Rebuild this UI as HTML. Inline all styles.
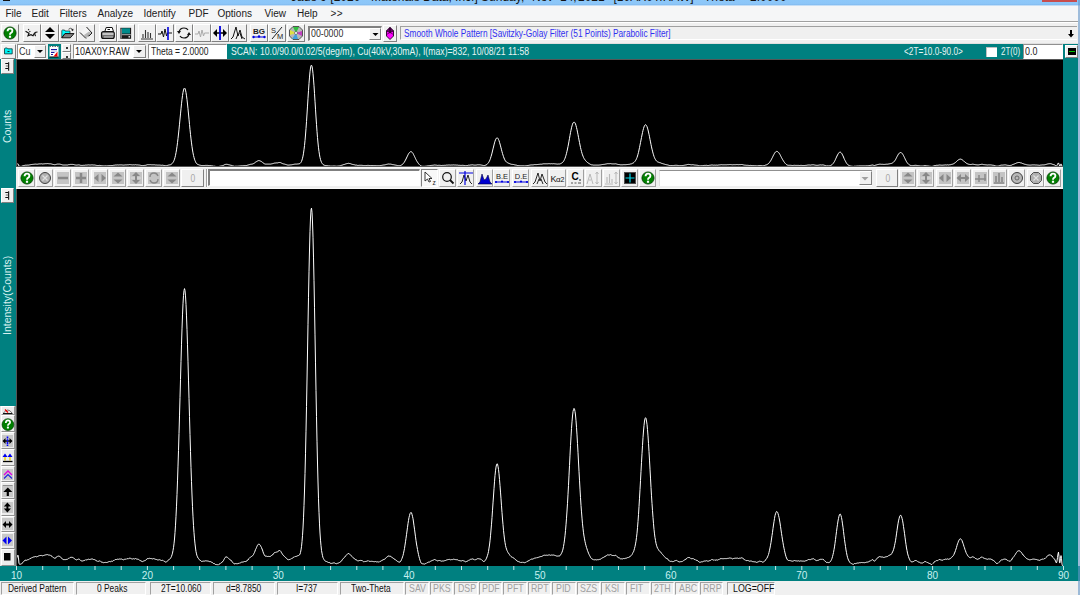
<!DOCTYPE html><html><head><meta charset="utf-8"><style>
*{box-sizing:border-box;margin:0;padding:0}
html,body{width:1080px;height:595px;overflow:hidden;background:#f0f0f0;font-family:"Liberation Sans",sans-serif;position:relative}
div{position:absolute}
.t{white-space:nowrap;font-size:10px;line-height:11px;color:#000}
.c{transform-origin:0 50%}
.b{background:#f0f0f0;border-top:1px solid #fff;border-left:1px solid #fff;border-right:1px solid #808080;border-bottom:1px solid #808080}
.bd{background:#f0f0f0;border-top:1px solid #fff;border-left:1px solid #fff;border-right:1px solid #808080;border-bottom:1px solid #808080}
.bd:after{content:"";position:absolute;left:2px;top:2px;right:2px;bottom:2px;background:#c8c8c8}
.sunk{background:#fff;border-top:1px solid #808080;border-left:1px solid #808080;border-right:1px solid #fff;border-bottom:1px solid #fff}
svg{position:absolute;left:0;top:0;overflow:visible}
.bm{background:#f0f0f0;border-top:1px solid #fff;border-left:1px solid #fff;border-right:1px solid #a0a0a0;border-bottom:1px solid #a0a0a0}
.sb{background:#f0f0f0;border-top:1px solid #a0a0a0;border-left:1px solid #a0a0a0;border-right:1px solid #fff;border-bottom:1px solid #fff}
</style></head><body>
<div style="left:0;top:0;width:1080px;height:5px;background:linear-gradient(#8dc8f9 0%,#8cc6f8 70%,#82bbef 100%);overflow:hidden"><div class="t" style="left:291px;top:-9px;font-size:12px;line-height:12px;color:#141414">Jade 9 [2020 - Materials Data, Inc.] Sunday,</div><div class="t" style="left:532px;top:-9px;font-size:12px;line-height:12px;color:#141414">Nov</div><div class="t" style="left:560px;top:-9px;font-size:12px;line-height:12px;color:#141414">14,</div><div class="t" style="left:578px;top:-9px;font-size:12px;line-height:12px;color:#141414">2021</div><div class="t" style="left:613.5px;top:-9px;font-size:12px;line-height:12px;color:#141414">[10AX0Y.RAW]</div><div class="t" style="left:704px;top:-9px;font-size:12px;line-height:12px;color:#141414">Theta</div><div class="t" style="left:738px;top:-9px;font-size:12px;line-height:12px;color:#141414">=</div><div class="t" style="left:750px;top:-9px;font-size:12px;line-height:12px;color:#141414">2.0000</div><div style="left:1042px;top:0;width:35px;height:2px;background:#c84d4d"></div><div style="left:2.5px;top:0;width:7.5px;height:1px;background:#111"></div></div><div style="left:0;top:5px;width:1080px;height:16px;background:#f5f6f7"></div><div style="left:0;top:5px;width:1080px;height:1px;background:#c4def6"></div><div style="left:0;top:21px;width:1078px;height:1px;background:#a0a0a0"></div><div style="left:0;top:22px;width:1078px;height:1px;background:#fff"></div><div class="t" style="left:5.5px;top:8px;color:#202020">File</div><div class="t" style="left:31.5px;top:8px;color:#202020">Edit</div><div class="t" style="left:59.5px;top:8px;color:#202020">Filters</div><div class="t" style="left:97.5px;top:8px;color:#202020">Analyze</div><div class="t" style="left:143.5px;top:8px;color:#202020">Identify</div><div class="t" style="left:188.5px;top:8px;color:#202020">PDF</div><div class="t" style="left:217.5px;top:8px;color:#202020">Options</div><div class="t" style="left:264.5px;top:8px;color:#202020">View</div><div class="t" style="left:297px;top:8px;color:#202020">Help</div><div class="t" style="left:330.5px;top:8px;color:#202020"><span style="letter-spacing:0.5px">&gt;&gt;</span></div><div class="b" style="left:1px;top:24px;width:18px;height:18px"><svg width="16" height="16" viewBox="0 0 16 16"><circle cx="8" cy="8" r="6.1" fill="#008000" stroke="#003a00" stroke-width="0.8"/><path d="M5.6 6.3 Q5.6 3.6 8 3.6 Q10.4 3.6 10.4 5.8 Q10.4 7.2 9 7.9 Q8 8.4 8 9.7" stroke="#fff" stroke-width="1.9" fill="none"/><rect x="6.9" y="10.7" width="2.2" height="2.1" fill="#fff"/></svg></div><div class="b" style="left:23px;top:24px;width:18px;height:18px"><svg width="16" height="16" viewBox="0 0 16 16"><path d="M1.5 6.3 L5 8.2 L4 10.7 L7 9.7 L9 10.8 L10.5 8.2 Q11.5 7 13.5 7" stroke="#111" stroke-width="1.2" fill="none"/><path d="M11.2 8.3 Q10.3 10 11.7 11" stroke="#111" stroke-width="1.1" fill="none"/><path d="M4.2 4.3 L5 5 M5.5 6 L6.2 7" stroke="#222" stroke-width="1.2"/></svg></div><div class="b" style="left:41px;top:24px;width:18px;height:18px"><svg width="16" height="16" viewBox="0 0 16 16"><path d="M8 2 L13 7 L3 7 Z M3 9 L13 9 L8 14 Z" fill="#000"/></svg></div><div class="b" style="left:59px;top:24px;width:18px;height:18px"><svg width="16" height="16" viewBox="0 0 16 16"><path d="M1.8 12.5 L1.8 5.5 L2.5 5 L4.5 5 L5 6 L10 6 L10 8.5 L5 8.5 L1.8 12.5 Z" fill="#00ffff" stroke="#102020" stroke-width="0.7"/><path d="M1.8 12.8 L5 8.6 L14 8.6 L10.3 12.8 Z" fill="#808080" stroke="#000" stroke-width="0.9"/><path d="M8.5 4.3 Q10.5 2.3 12.5 4.2" stroke="#555" stroke-width="1" fill="none"/><path d="M11 4.8 L13.5 3.8 L13 6.2 Z" fill="#111"/></svg></div><div class="b" style="left:77px;top:24px;width:18px;height:18px"><svg width="16" height="16" viewBox="0 0 16 16"><path d="M2 7.5 L8.5 2 L14 8 L8 13.5 Z" fill="#f4f4f4"/><path d="M8 13.5 L11 11 L14 8 L11 6.5 L6 10 Z" fill="#b8b8b8"/><path d="M9.5 10 L12 9.5 L10.5 12 Z" fill="#808080"/><path d="M2 7.5 L8 13.5 M8.5 2 L14 8 L11 11" stroke="#222" stroke-width="1" fill="none"/></svg></div><div class="b" style="left:99px;top:24px;width:18px;height:18px"><svg width="16" height="16" viewBox="0 0 16 16"><path d="M6.2 2.5 L12.2 2.5 L13.5 6.5 L4.8 6.5 Z" fill="#fff" stroke="#111" stroke-width="1"/><path d="M7.5 4.5 L10 4.5" stroke="#111" stroke-width="1"/><rect x="1.5" y="6.5" width="12.8" height="7" rx="2" fill="#707070" stroke="#111" stroke-width="1.1"/><rect x="2.5" y="8.2" width="11" height="1.6" fill="#d8d8d8"/><rect x="4" y="11.3" width="9" height="1.2" fill="#b0b0b0"/></svg></div><div class="b" style="left:117px;top:24px;width:18px;height:18px"><svg width="16" height="16" viewBox="0 0 16 16"><rect x="2.3" y="2.8" width="10.8" height="11" fill="#1a1a1a"/><rect x="2.6" y="3.5" width="1.2" height="10" fill="#909090"/><rect x="4" y="3.3" width="8" height="5.2" fill="#008b8b"/><rect x="3.8" y="9.2" width="9" height="1" fill="#b0b0b0"/><rect x="10.5" y="11" width="1.5" height="1.6" fill="#d0d0d0"/></svg></div><div class="b" style="left:138px;top:24px;width:18px;height:18px"><svg width="16" height="16" viewBox="0 0 16 16"><path d="M2 14 L14 14 M4 13 L4 9 M6.5 13 L6.5 5 M9 13 L9 7 M11.5 13 L11.5 8" stroke="#333" stroke-width="1.1" fill="none"/></svg></div><div class="b" style="left:156px;top:24px;width:18px;height:18px"><svg width="16" height="16" viewBox="0 0 16 16"><path d="M1 9 L4 9 L5 6 L6.5 12 L8 4 L9.5 11 L10.5 8 L15 8" stroke="#111" stroke-width="1" fill="none"/><path d="M11 2 L11 15" stroke="#0000e0" stroke-width="1.6"/></svg></div><div class="b" style="left:175px;top:24px;width:18px;height:18px"><svg width="16" height="16" viewBox="0 0 16 16"><path d="M3 7 Q4 3 8 3 Q11 3 12 5 M13 9 Q12 13 8 13 Q5 13 4 11" stroke="#111" stroke-width="1.2" fill="none"/><path d="M1 6 L5 6 L3 9 Z M11 10 L15 10 L13 7 Z" fill="#111"/></svg></div><div class="b" style="left:193px;top:24px;width:18px;height:18px"><svg width="16" height="16" viewBox="0 0 16 16"><path d="M1 9 L4 9 L5 6 L6.5 12 L8 5 L9.5 11 L10.5 8 L15 8" stroke="#aaa" stroke-width="1" fill="none"/></svg></div><div class="b" style="left:211px;top:24px;width:18px;height:18px"><svg width="16" height="16" viewBox="0 0 16 16"><path d="M1 8 L5 4 L5 12 Z M15 8 L11 4 L11 12 Z" fill="#000"/><path d="M4 8 L12 8" stroke="#000" stroke-width="1.5"/><path d="M8 1 L8 15" stroke="#0000e0" stroke-width="1.8"/></svg></div><div class="b" style="left:229px;top:24px;width:18px;height:18px"><svg width="16" height="16" viewBox="0 0 16 16"><path d="M1 14 L3 12 L6 2 L8 11 L10 5 L12 12 L15 14 M6 14 L8 9 M10 8 L12 14" stroke="#111" stroke-width="1" fill="none"/></svg></div><div class="b" style="left:250px;top:24px;width:18px;height:18px"><svg width="16" height="16" viewBox="0 0 16 16"><text x="8" y="9" font-family="Liberation Sans" font-size="8" font-weight="bold" fill="#222" text-anchor="middle">BG</text><path d="M2 12 L14 12" stroke="#0000e0" stroke-width="1"/><circle cx="2.5" cy="12" r="1.2" fill="#0000e0"/><circle cx="8" cy="11.5" r="1.2" fill="#0000e0"/><circle cx="13.5" cy="12" r="1.2" fill="#0000e0"/></svg></div><div class="b" style="left:268px;top:24px;width:18px;height:18px"><svg width="16" height="16" viewBox="0 0 16 16"><text x="4.5" y="8" font-family="Liberation Sans" font-size="7.5" fill="#222" text-anchor="middle">S</text><text x="11" y="14" font-family="Liberation Sans" font-size="7.5" fill="#222" text-anchor="middle">M</text><path d="M3 14 L13 2" stroke="#222" stroke-width="1"/></svg></div><div class="b" style="left:287px;top:24px;width:18px;height:18px"><svg width="16" height="16" viewBox="0 0 16 16"><path d="M5 1.5 L11 1.5 L14.5 5 L14.5 11 L11 14.5 L5 14.5 L1.5 11 L1.5 5 Z" fill="#b8b8b8" stroke="#333" stroke-width="0.8"/><path d="M8 8 L5 2 L11 2 Z" fill="#30c040"/><path d="M8 8 L14 6 L14 11 Z" fill="#c040c0"/><path d="M8 8 L10 14 L4 14 Z" fill="#40a0e0"/><path d="M8 8 L2 10 L2 5 Z" fill="#e0e040"/><circle cx="8" cy="8" r="1.5" fill="#fff" stroke="#333" stroke-width="0.5"/></svg></div><div class="sunk" style="left:308px;top:26px;width:74px;height:15px;border-top:2px solid #808080;border-left:2px solid #808080"></div><div class="t" style="left:311px;top:28px;color:#303030;font-size:11px"><span style="display:inline-block;transform:scaleX(0.8);transform-origin:0 0">00-0000</span></div><div class="b" style="left:368.5px;top:27.5px;width:12.5px;height:12px"><svg width="10" height="10" viewBox="0 0 10 10"><path d="M2.5 4 L8.5 4 L5.5 7 Z" fill="#000"/></svg></div><div class="b" style="left:383px;top:25px;width:14px;height:17px"><svg width="12" height="15" viewBox="0 0 12 15"><path d="M6 1.5 L9.5 5 L9.5 10 L6 13.5 L2.5 10 L2.5 5 Z" fill="#ff00ff" stroke="#200020" stroke-width="0.9"/><path d="M6 1.5 L6 6.5 L2.5 5 L6 1.5 L9.5 5 L6 6.5 Z" fill="#700070" stroke="#200020" stroke-width="0.7"/><path d="M2.5 8.5 L6 6.5 L9.5 8.5" stroke="#200020" stroke-width="0.6" fill="none"/></svg></div><div style="left:400px;top:26px;width:677px;height:14px;border-top:1px solid #a0a0a0;border-left:1px solid #a0a0a0;border-bottom:1px solid #fff"></div><div class="t" style="left:404px;top:28px;color:#3030f0"><span style="display:inline-block;transform:scaleX(0.83);transform-origin:0 0">Smooth Whole Pattern [Savitzky-Golay Filter (51 Points) Parabolic Filter]</span></div><svg style="left:0;top:0" width="1080" height="60" viewBox="0 0 1080 60"><path d="M1071 30 L1071 35" stroke="#000" stroke-width="2"/><path d="M1068 34 L1074 34 L1071 37.5 Z" fill="#000"/></svg><div style="left:0;top:43px;width:1080px;height:1px;background:#e0e0e0"></div><div style="left:227px;top:44px;width:796px;height:15px;background:#008080"></div><div style="left:1023px;top:44px;width:55px;height:15px;background:#008080"></div><div class="b" style="left:1px;top:44px;width:15px;height:15px"><svg width="13" height="13" viewBox="0 0 13 13"><path d="M2.5 8.9 L2.5 3.8 L3.2 3 L5.2 3 L5.9 3.8 L10.2 3.8 L10.2 8.9 Z" fill="#00f0f0" stroke="#103030" stroke-width="0.8"/><path d="M5.5 6.5 L7.5 6.5" stroke="#103030" stroke-width="1"/></svg></div><div class="sunk" style="left:16.5px;top:44px;width:29.5px;height:15px;border-top:1px solid #909090;border-left:1px solid #909090"></div><div class="t" style="left:19px;top:46px;color:#333;font-size:11px"><span style="display:inline-block;transform:scaleX(0.82);transform-origin:0 0">Cu</span></div><div class="b" style="left:34px;top:45px;width:11.5px;height:13px"><svg width="10" height="10" viewBox="0 0 10 10"><path d="M2 4 L8 4 L5 7 Z" fill="#000"/></svg></div><div style="left:48px;top:44px;width:12.5px;height:15px;background:#008080"></div><svg style="left:0;top:0" width="80" height="70" viewBox="0 0 80 70"><rect x="49.5" y="46" width="9" height="11" fill="#fff"/><path d="M49.5 57 L58.5 57" stroke="#000" stroke-width="1"/><path d="M49.5 46.5 L58.5 46.5" stroke="#707070" stroke-width="1" stroke-dasharray="1.5 1"/><path d="M51 49.5 L57 49.5" stroke="#1a1aa0" stroke-width="1"/><path d="M51 51 L57 51" stroke="#a8b0e0" stroke-width="1"/><path d="M51 52.5 L54.5 52.5" stroke="#1a1aa0" stroke-width="1"/><path d="M51 54.5 L53 54.5" stroke="#1a1aa0" stroke-width="1"/><path d="M53.5 56.5 L57.5 51.5 L57.5 56.5 Z" fill="#f00000"/></svg><div class="b" style="left:61.5px;top:44px;width:9.5px;height:7.5px"><div style="left:3px;top:2px;width:2px;height:2px;background:#333"></div></div><div class="b" style="left:61.5px;top:51.5px;width:9.5px;height:7.5px"><div style="left:3px;top:3px;width:2px;height:2px;background:#333"></div></div><div class="sunk" style="left:72.5px;top:44px;width:73px;height:15px;border-top:1px solid #909090;border-left:1px solid #909090"></div><div class="t" style="left:75px;top:46px;color:#222;font-size:10.5px"><span style="display:inline-block;transform:scaleX(0.85);transform-origin:0 0">10AX0Y.RAW</span></div><div class="b" style="left:133px;top:45px;width:12.5px;height:13px"><svg width="10" height="10" viewBox="0 0 10 10"><path d="M2 4 L8 4 L5 7 Z" fill="#000"/></svg></div><div class="sunk" style="left:148px;top:44px;width:79px;height:15px;border-top:1px solid #909090;border-left:1px solid #909090"></div><div class="t" style="left:151px;top:46px;color:#222;font-size:10.5px"><span style="display:inline-block;transform:scaleX(0.81);transform-origin:0 0">Theta = 2.0000</span></div><div class="t" style="left:230.5px;top:46px;color:#e8f4f4"><span style="display:inline-block;transform:scaleX(0.867);transform-origin:0 0">SCAN: 10.0/90.0/0.02/5(deg/m), Cu(40kV,30mA), I(max)=832, 10/08/21 11:58</span></div><div class="t" style="left:904px;top:46px;color:#e8f4f4;font-size:10.5px"><span style="display:inline-block;transform:scaleX(0.785);transform-origin:0 0">&lt;2T=10.0-90.0&gt;</span></div><div style="left:986px;top:47px;width:11px;height:10px;background:#fff;border-top:1px solid #c0c0c0;border-left:1px solid #c0c0c0"></div><div class="t" style="left:1001px;top:46px;color:#e8f4f4;font-size:10.5px"><span style="display:inline-block;transform:scaleX(0.76);transform-origin:0 0">2T(0)</span></div><div class="sunk" style="left:1023px;top:44px;width:40px;height:15px;border-top:1px solid #909090;border-left:1px solid #909090"></div><div class="t" style="left:1025px;top:46px;color:#222;font-size:10.5px"><span style="display:inline-block;transform:scaleX(0.85);transform-origin:0 0">0.0</span></div><div class="b" style="left:1065px;top:44.5px;width:13px;height:13px"><div style="left:2px;top:2px;width:8px;height:7px;background:#000"></div><div style="left:3px;top:5px;width:6px;height:1px;background:#00c000"></div></div><div style="left:0;top:59px;width:16px;height:522px;background:#008080"></div><div style="left:1063px;top:59px;width:15px;height:522px;background:#008080"></div><div class="b" style="left:1px;top:59px;width:13px;height:15px"><svg width="11" height="13" viewBox="0 0 11 13"><path d="M3.3 3.5 L6.5 3.5 M3.3 8.5 L6.5 8.5" stroke="#111" stroke-width="1.1" fill="none"/><path d="M3.8 6 L6.5 6" stroke="#777" stroke-width="1.1"/><path d="M6.6 2.3 L6.6 10.8" stroke="#222" stroke-width="1.2"/></svg></div><div class="b" style="left:1px;top:188px;width:13px;height:15px"><svg width="11" height="13" viewBox="0 0 11 13"><path d="M3.3 3.5 L6.5 3.5 M3.3 8.5 L6.5 8.5" stroke="#111" stroke-width="1.1" fill="none"/><path d="M3.8 6 L6.5 6" stroke="#777" stroke-width="1.1"/><path d="M6.6 2.3 L6.6 10.8" stroke="#222" stroke-width="1.2"/></svg></div><div class="t" style="left:-9px;top:121px;width:33px;height:11px;text-align:center;color:#d8f0f0;font-size:10.5px;transform:rotate(-90deg)">Counts</div><div class="t" style="left:-32px;top:290px;width:79px;height:11px;text-align:center;color:#d8f0f0;font-size:10.5px;transform:rotate(-90deg)">Intensity(Counts)</div><div style="left:0;top:406px;width:16px;height:160px;background:#e8e8e8;border-right:1px solid #909090"></div><div style="left:0.5px;top:406px;width:14.5px;height:9px;background:#ececec;border-top:1px solid #fff;border-left:1px solid #fff;border-right:1px solid #909090;border-bottom:1px solid #909090"></div><div style="left:0.5px;top:415px;width:14.5px;height:16.5px;background:#ececec;border-top:1px solid #fff;border-left:1px solid #fff;border-right:1px solid #909090;border-bottom:1px solid #909090"></div><div style="left:0.5px;top:432px;width:14.5px;height:16.5px;background:#ececec;border-top:1px solid #fff;border-left:1px solid #fff;border-right:1px solid #909090;border-bottom:1px solid #909090"></div><div style="left:0.5px;top:448.5px;width:14.5px;height:17px;background:#ececec;border-top:1px solid #fff;border-left:1px solid #fff;border-right:1px solid #909090;border-bottom:1px solid #909090"></div><div style="left:0.5px;top:465.5px;width:14.5px;height:16.5px;background:#ececec;border-top:1px solid #fff;border-left:1px solid #fff;border-right:1px solid #909090;border-bottom:1px solid #909090"></div><div style="left:0.5px;top:482px;width:14.5px;height:17px;background:#ececec;border-top:1px solid #fff;border-left:1px solid #fff;border-right:1px solid #909090;border-bottom:1px solid #909090"></div><div style="left:0.5px;top:499px;width:14.5px;height:16.5px;background:#ececec;border-top:1px solid #fff;border-left:1px solid #fff;border-right:1px solid #909090;border-bottom:1px solid #909090"></div><div style="left:0.5px;top:515.5px;width:14.5px;height:16.5px;background:#ececec;border-top:1px solid #fff;border-left:1px solid #fff;border-right:1px solid #909090;border-bottom:1px solid #909090"></div><div style="left:0.5px;top:532px;width:14.5px;height:16.5px;background:#ececec;border-top:1px solid #fff;border-left:1px solid #fff;border-right:1px solid #909090;border-bottom:1px solid #909090"></div><div style="left:0.5px;top:548.5px;width:14.5px;height:17px;background:#ececec;border-top:1px solid #fff;border-left:1px solid #fff;border-right:1px solid #909090;border-bottom:1px solid #909090"></div><div style="left:2px;top:435px;width:11px;height:11.5px;background:#c8c8c8"></div><div style="left:2px;top:469px;width:11px;height:11px;background:#c8c8c8"></div><div style="left:2px;top:485px;width:11px;height:12px;background:#c8c8c8"></div><div style="left:2px;top:501.5px;width:11px;height:11.5px;background:#c8c8c8"></div><div style="left:2px;top:518px;width:11px;height:12px;background:#c8c8c8"></div><div style="left:2px;top:533.5px;width:11px;height:12.5px;background:#c8c8c8"></div><svg width="20" height="595" style="left:0;top:0"><path d="M3.5 413 Q7.8 407 12 413" stroke="#555" stroke-width="0.8" fill="none"/><path d="M5 409.5 L8 412.5" stroke="#f00000" stroke-width="1.2"/><path d="M3 413.5 L12.5 413.5" stroke="#111" stroke-width="1"/><circle cx="7.9" cy="424.6" r="5.9" fill="#008000" stroke="#003a00" stroke-width="0.7"/><path d="M5.8 423 Q5.8 420.3 7.9 420.3 Q10.1 420.3 10.1 422.3 Q10.1 423.5 8.9 424.1 Q7.9 424.6 7.9 425.7" stroke="#fff" stroke-width="1.7" fill="none"/><rect x="6.9" y="426.6" width="2" height="1.9" fill="#fff"/><path d="M2.5 441 L5.5 438 L5.5 444 Z M12.5 441 L9.5 438 L9.5 444 Z" fill="#000"/><path d="M5 441 L10 441" stroke="#000" stroke-width="1.5"/><path d="M7.5 436.5 L7.5 446" stroke="#0000ff" stroke-width="1.6" stroke-dasharray="2 0.7"/><path d="M2.5 457 L5 453.5 L7.5 457 Z M7.5 457 L10 453.5 L12.5 457 Z" fill="#0000f0"/><path d="M5 457 L5 460.5 M10 457 L10 460.5" stroke="#e8d000" stroke-width="1.4"/><path d="M3 461.5 L12.5 461.5" stroke="#000" stroke-width="1.3"/><path d="M4 475 L8 471 L12 475" stroke="#e000e0" stroke-width="1.3" fill="none"/><path d="M4 478.5 L8 474.5 L12 478.5" stroke="#2020e0" stroke-width="1.1" fill="none"/><path d="M3 485.5 L12.5 485.5" stroke="#909090" stroke-width="1"/><path d="M7.8 487.5 L12.3 492 L3.3 492 Z" fill="#000"/><path d="M7.8 491 L7.8 496" stroke="#000" stroke-width="2.2"/><path d="M7.4 502.5 L11 506.5 L3.8 506.5 Z M7.4 512.5 L11 508.5 L3.8 508.5 Z" fill="#000"/><path d="M7.4 506 L7.4 509" stroke="#000" stroke-width="2"/><path d="M2.5 524.5 L6 521 L6 528 Z M12.5 524.5 L9 521 L9 528 Z" fill="#000"/><path d="M5 524.5 L10 524.5" stroke="#000" stroke-width="2"/><path d="M2.5 540.5 L6.5 536.5 L6.5 544.5 Z M12 540.5 L8 536.5 L8 544.5 Z" fill="#0000f0"/><rect x="4" y="553" width="6.5" height="7.5" fill="#000"/></svg><div style="left:16px;top:59px;width:1047px;height:108px;background:#000;border-top:1px solid #555;border-left:1px solid #555;border-bottom:1px solid #555;overflow:hidden"><svg width="1047" height="108" viewBox="16 59 1047 108" style="left:-1px;top:-1px"><path d="M16.0 165.2 L16.5 164.8 L17.0 164.4 L17.5 163.9 L18.0 163.8 L18.5 164.6 L19.0 166.2 L19.5 166.3 L20.0 166.4 L20.5 166.4 L21.0 166.4 L21.5 166.3 L22.0 166.1 L22.5 165.9 L23.0 165.8 L23.5 165.6 L24.0 165.6 L24.5 165.4 L25.0 165.2 L25.5 165.2 L26.0 165.2 L26.5 165.2 L27.0 165.2 L27.5 165.1 L28.0 165.0 L28.5 165.1 L29.0 164.9 L29.5 164.9 L30.0 164.7 L30.5 164.7 L31.0 164.7 L31.5 164.5 L32.0 164.5 L32.5 164.4 L33.0 164.4 L33.5 164.3 L34.0 164.2 L34.5 164.2 L35.0 164.2 L35.5 164.1 L36.0 164.2 L36.5 164.2 L37.0 164.2 L37.5 164.2 L38.0 164.1 L38.5 164.0 L39.0 163.9 L39.5 163.9 L40.0 163.8 L40.5 163.9 L41.0 163.9 L41.5 163.8 L42.0 164.0 L42.5 164.0 L43.0 164.0 L43.5 163.9 L44.0 163.8 L44.5 163.8 L45.0 163.8 L45.5 163.7 L46.0 163.7 L46.5 163.7 L47.0 163.6 L47.5 163.6 L48.0 163.6 L48.5 163.7 L49.0 163.7 L49.5 163.8 L50.0 163.7 L50.5 163.8 L51.0 164.0 L51.5 164.0 L52.0 164.1 L52.5 164.3 L53.0 164.4 L53.5 164.5 L54.0 164.5 L54.5 164.7 L55.0 164.7 L55.5 164.6 L56.0 164.5 L56.5 164.3 L57.0 164.2 L57.5 164.1 L58.0 164.1 L58.5 164.1 L59.0 164.0 L59.5 164.1 L60.0 164.3 L60.5 164.3 L61.0 164.5 L61.5 164.6 L62.0 164.7 L62.5 164.9 L63.0 165.1 L63.5 165.0 L64.0 165.1 L64.5 165.0 L65.0 165.1 L65.5 165.0 L66.0 165.0 L66.5 165.0 L67.0 164.9 L67.5 165.0 L68.0 164.8 L68.5 164.7 L69.0 164.7 L69.5 164.6 L70.0 164.5 L70.5 164.4 L71.0 164.4 L71.5 164.4 L72.0 164.4 L72.5 164.4 L73.0 164.5 L73.5 164.5 L74.0 164.7 L74.5 164.8 L75.0 165.0 L75.5 165.0 L76.0 165.1 L76.5 165.1 L77.0 165.1 L77.5 165.0 L78.0 164.9 L78.5 164.9 L79.0 165.0 L79.5 165.0 L80.0 165.1 L80.5 165.3 L81.0 165.4 L81.5 165.4 L82.0 165.5 L82.5 165.4 L83.0 165.4 L83.5 165.3 L84.0 165.3 L84.5 165.3 L85.0 165.2 L85.5 165.1 L86.0 165.1 L86.5 165.1 L87.0 165.1 L87.5 165.0 L88.0 165.0 L88.5 164.9 L89.0 165.0 L89.5 165.0 L90.0 165.0 L90.5 165.0 L91.0 165.0 L91.5 164.9 L92.0 164.9 L92.5 164.9 L93.0 165.0 L93.5 165.0 L94.0 165.1 L94.5 165.0 L95.0 165.1 L95.5 165.2 L96.0 165.3 L96.5 165.4 L97.0 165.4 L97.5 165.5 L98.0 165.4 L98.5 165.5 L99.0 165.5 L99.5 165.4 L100.0 165.4 L100.5 165.5 L101.0 165.6 L101.5 165.7 L102.0 165.8 L102.5 165.8 L103.0 165.9 L103.5 165.9 L104.0 165.9 L104.5 165.9 L105.0 165.9 L105.5 165.8 L106.0 165.9 L106.5 165.9 L107.0 165.9 L107.5 165.8 L108.0 165.8 L108.5 165.7 L109.0 165.6 L109.5 165.6 L110.0 165.7 L110.5 165.6 L111.0 165.6 L111.5 165.5 L112.0 165.5 L112.5 165.5 L113.0 165.4 L113.5 165.3 L114.0 165.3 L114.5 165.2 L115.0 165.1 L115.5 165.0 L116.0 165.0 L116.5 165.0 L117.0 165.0 L117.5 164.9 L118.0 165.0 L118.5 165.0 L119.0 164.9 L119.5 164.9 L120.0 165.0 L120.5 164.9 L121.0 164.9 L121.5 164.9 L122.0 164.9 L122.5 165.0 L123.0 165.0 L123.5 165.1 L124.0 165.0 L124.5 165.0 L125.0 164.9 L125.5 164.9 L126.0 164.9 L126.5 164.9 L127.0 164.8 L127.5 164.8 L128.0 164.7 L128.5 164.8 L129.0 164.7 L129.5 164.6 L130.0 164.6 L130.5 164.7 L131.0 164.8 L131.5 164.8 L132.0 164.8 L132.5 164.9 L133.0 164.9 L133.5 164.8 L134.0 164.8 L134.5 164.9 L135.0 164.8 L135.5 164.7 L136.0 164.9 L136.5 164.9 L137.0 164.9 L137.5 164.9 L138.0 165.0 L138.5 165.0 L139.0 165.1 L139.5 165.1 L140.0 165.3 L140.5 165.3 L141.0 165.5 L141.5 165.5 L142.0 165.5 L142.5 165.6 L143.0 165.6 L143.5 165.5 L144.0 165.4 L144.5 165.4 L145.0 165.3 L145.5 165.3 L146.0 165.1 L146.5 165.0 L147.0 164.9 L147.5 164.7 L148.0 164.7 L148.5 164.7 L149.0 164.7 L149.5 164.7 L150.0 164.7 L150.5 164.7 L151.0 164.9 L151.5 164.8 L152.0 164.8 L152.5 164.8 L153.0 164.8 L153.5 164.8 L154.0 164.9 L154.5 164.8 L155.0 164.8 L155.5 165.0 L156.0 165.0 L156.5 165.0 L157.0 165.0 L157.5 165.1 L158.0 165.2 L158.5 165.1 L159.0 165.2 L159.5 165.1 L160.0 165.1 L160.5 165.2 L161.0 165.3 L161.5 165.3 L162.0 165.2 L162.5 165.2 L163.0 165.3 L163.5 165.4 L164.0 165.5 L164.5 165.5 L165.0 165.7 L165.5 165.7 L166.0 165.8 L166.5 165.7 L167.0 165.6 L167.5 165.4 L168.0 165.3 L168.5 165.1 L169.0 165.1 L169.5 164.9 L170.0 164.8 L170.5 164.7 L171.0 164.4 L171.5 164.1 L172.0 163.7 L172.5 163.2 L173.0 162.4 L173.5 161.7 L174.0 160.5 L174.5 159.2 L175.0 157.4 L175.5 155.3 L176.0 152.7 L176.5 149.9 L177.0 146.5 L177.5 142.7 L178.0 138.5 L178.5 134.0 L179.0 129.2 L179.5 124.2 L180.0 119.0 L180.5 113.9 L181.0 108.8 L181.5 103.8 L182.0 99.5 L182.5 95.5 L183.0 92.4 L183.5 90.0 L184.0 88.6 L184.5 88.0 L185.0 88.6 L185.5 90.1 L186.0 92.5 L186.5 95.8 L187.0 99.6 L187.5 104.0 L188.0 108.8 L188.5 114.0 L189.0 119.2 L189.5 124.4 L190.0 129.6 L190.5 134.4 L191.0 138.9 L191.5 142.9 L192.0 146.7 L192.5 150.0 L193.0 152.9 L193.5 155.4 L194.0 157.4 L194.5 159.2 L195.0 160.6 L195.5 161.7 L196.0 162.8 L196.5 163.4 L197.0 164.0 L197.5 164.3 L198.0 164.6 L198.5 164.7 L199.0 164.9 L199.5 165.1 L200.0 165.3 L200.5 165.3 L201.0 165.5 L201.5 165.5 L202.0 165.5 L202.5 165.5 L203.0 165.5 L203.5 165.5 L204.0 165.4 L204.5 165.5 L205.0 165.5 L205.5 165.4 L206.0 165.4 L206.5 165.4 L207.0 165.5 L207.5 165.4 L208.0 165.5 L208.5 165.5 L209.0 165.6 L209.5 165.6 L210.0 165.6 L210.5 165.6 L211.0 165.7 L211.5 165.8 L212.0 165.9 L212.5 165.9 L213.0 166.0 L213.5 166.2 L214.0 166.2 L214.5 166.2 L215.0 166.3 L215.5 166.4 L216.0 166.4 L216.5 166.5 L217.0 166.5 L217.5 166.5 L218.0 166.5 L218.5 166.5 L219.0 166.4 L219.5 166.3 L220.0 166.3 L220.5 166.1 L221.0 165.9 L221.5 165.9 L222.0 165.7 L222.5 165.7 L223.0 165.4 L223.5 165.3 L224.0 165.0 L224.5 164.7 L225.0 164.5 L225.5 164.4 L226.0 164.3 L226.5 164.3 L227.0 164.2 L227.5 164.4 L228.0 164.5 L228.5 164.7 L229.0 164.8 L229.5 164.9 L230.0 165.0 L230.5 165.2 L231.0 165.2 L231.5 165.4 L232.0 165.6 L232.5 165.8 L233.0 165.9 L233.5 166.0 L234.0 166.2 L234.5 166.3 L235.0 166.2 L235.5 166.2 L236.0 166.3 L236.5 166.2 L237.0 166.3 L237.5 166.2 L238.0 166.2 L238.5 166.1 L239.0 166.2 L239.5 166.0 L240.0 165.9 L240.5 165.9 L241.0 165.9 L241.5 165.8 L242.0 165.8 L242.5 165.8 L243.0 165.8 L243.5 165.7 L244.0 165.6 L244.5 165.6 L245.0 165.6 L245.5 165.6 L246.0 165.4 L246.5 165.5 L247.0 165.4 L247.5 165.2 L248.0 165.2 L248.5 164.9 L249.0 164.8 L249.5 164.6 L250.0 164.4 L250.5 164.3 L251.0 164.2 L251.5 164.2 L252.0 164.0 L252.5 164.0 L253.0 163.8 L253.5 163.6 L254.0 163.2 L254.5 163.0 L255.0 162.6 L255.5 162.2 L256.0 161.9 L256.5 161.6 L257.0 161.3 L257.5 161.0 L258.0 160.8 L258.5 160.6 L259.0 160.6 L259.5 160.7 L260.0 160.8 L260.5 161.1 L261.0 161.4 L261.5 161.6 L262.0 162.0 L262.5 162.3 L263.0 162.8 L263.5 163.2 L264.0 163.5 L264.5 163.8 L265.0 164.0 L265.5 164.1 L266.0 164.2 L266.5 164.1 L267.0 164.2 L267.5 164.1 L268.0 164.1 L268.5 164.1 L269.0 164.0 L269.5 164.1 L270.0 164.1 L270.5 164.1 L271.0 164.1 L271.5 163.9 L272.0 163.8 L272.5 163.7 L273.0 163.5 L273.5 163.4 L274.0 163.3 L274.5 163.1 L275.0 163.1 L275.5 163.0 L276.0 163.0 L276.5 162.9 L277.0 162.9 L277.5 162.9 L278.0 162.7 L278.5 162.6 L279.0 162.5 L279.5 162.5 L280.0 162.5 L280.5 162.6 L281.0 162.8 L281.5 163.1 L282.0 163.3 L282.5 163.6 L283.0 163.6 L283.5 163.9 L284.0 163.9 L284.5 164.1 L285.0 164.3 L285.5 164.4 L286.0 164.6 L286.5 164.7 L287.0 164.8 L287.5 165.0 L288.0 164.9 L288.5 165.1 L289.0 165.1 L289.5 165.0 L290.0 165.0 L290.5 164.9 L291.0 164.9 L291.5 164.8 L292.0 164.6 L292.5 164.6 L293.0 164.5 L293.5 164.4 L294.0 164.4 L294.5 164.2 L295.0 164.3 L295.5 164.1 L296.0 164.1 L296.5 164.1 L297.0 164.0 L297.5 164.0 L298.0 163.9 L298.5 163.9 L299.0 163.8 L299.5 163.7 L300.0 163.5 L300.5 163.0 L301.0 162.3 L301.5 161.4 L302.0 160.0 L302.5 158.2 L303.0 156.1 L303.5 153.2 L304.0 149.7 L304.5 145.6 L305.0 140.6 L305.5 135.0 L306.0 128.6 L306.5 121.6 L307.0 114.0 L307.5 106.1 L308.0 98.2 L308.5 90.5 L309.0 83.3 L309.5 77.1 L310.0 71.8 L310.5 68.0 L311.0 65.7 L311.5 65.2 L312.0 66.3 L312.5 69.1 L313.0 73.4 L313.5 79.1 L314.0 85.8 L314.5 93.3 L315.0 101.2 L315.5 109.2 L316.0 117.0 L316.5 124.4 L317.0 131.4 L317.5 137.6 L318.0 143.0 L318.5 147.8 L319.0 151.6 L319.5 154.9 L320.0 157.5 L320.5 159.5 L321.0 161.1 L321.5 162.4 L322.0 163.2 L322.5 163.9 L323.0 164.5 L323.5 164.8 L324.0 165.0 L324.5 165.3 L325.0 165.4 L325.5 165.5 L326.0 165.6 L326.5 165.6 L327.0 165.7 L327.5 165.7 L328.0 165.7 L328.5 165.9 L329.0 165.9 L329.5 165.9 L330.0 165.9 L330.5 166.1 L331.0 166.2 L331.5 166.1 L332.0 166.1 L332.5 166.1 L333.0 166.0 L333.5 166.0 L334.0 166.0 L334.5 166.0 L335.0 166.0 L335.5 166.1 L336.0 166.2 L336.5 166.2 L337.0 166.2 L337.5 166.1 L338.0 166.1 L338.5 166.0 L339.0 166.0 L339.5 165.9 L340.0 165.7 L340.5 165.7 L341.0 165.6 L341.5 165.3 L342.0 165.3 L342.5 165.0 L343.0 164.8 L343.5 164.6 L344.0 164.5 L344.5 164.4 L345.0 164.2 L345.5 164.0 L346.0 163.9 L346.5 163.7 L347.0 163.5 L347.5 163.5 L348.0 163.3 L348.5 163.3 L349.0 163.3 L349.5 163.5 L350.0 163.5 L350.5 163.7 L351.0 163.9 L351.5 164.1 L352.0 164.2 L352.5 164.4 L353.0 164.5 L353.5 164.6 L354.0 164.7 L354.5 164.8 L355.0 164.8 L355.5 165.1 L356.0 165.1 L356.5 165.1 L357.0 165.2 L357.5 165.4 L358.0 165.4 L358.5 165.4 L359.0 165.3 L359.5 165.3 L360.0 165.3 L360.5 165.3 L361.0 165.3 L361.5 165.3 L362.0 165.3 L362.5 165.4 L363.0 165.5 L363.5 165.6 L364.0 165.7 L364.5 165.6 L365.0 165.5 L365.5 165.6 L366.0 165.6 L366.5 165.5 L367.0 165.4 L367.5 165.4 L368.0 165.4 L368.5 165.4 L369.0 165.5 L369.5 165.5 L370.0 165.5 L370.5 165.6 L371.0 165.6 L371.5 165.5 L372.0 165.5 L372.5 165.5 L373.0 165.7 L373.5 165.6 L374.0 165.6 L374.5 165.6 L375.0 165.6 L375.5 165.6 L376.0 165.6 L376.5 165.7 L377.0 165.7 L377.5 165.7 L378.0 165.8 L378.5 165.7 L379.0 165.8 L379.5 165.7 L380.0 165.6 L380.5 165.5 L381.0 165.4 L381.5 165.4 L382.0 165.2 L382.5 165.2 L383.0 165.1 L383.5 165.0 L384.0 165.1 L384.5 164.9 L385.0 164.9 L385.5 164.7 L386.0 164.5 L386.5 164.4 L387.0 164.3 L387.5 164.2 L388.0 164.0 L388.5 164.0 L389.0 164.0 L389.5 164.1 L390.0 164.0 L390.5 164.1 L391.0 164.2 L391.5 164.3 L392.0 164.3 L392.5 164.6 L393.0 164.6 L393.5 164.7 L394.0 164.9 L394.5 164.9 L395.0 165.0 L395.5 165.1 L396.0 165.1 L396.5 165.3 L397.0 165.4 L397.5 165.6 L398.0 165.6 L398.5 165.7 L399.0 165.7 L399.5 165.7 L400.0 165.8 L400.5 165.5 L401.0 165.4 L401.5 165.0 L402.0 164.7 L402.5 164.3 L403.0 163.9 L403.5 163.3 L404.0 162.6 L404.5 161.9 L405.0 160.9 L405.5 160.0 L406.0 159.0 L406.5 158.0 L407.0 156.9 L407.5 155.9 L408.0 154.8 L408.5 153.9 L409.0 153.1 L409.5 152.5 L410.0 152.0 L410.5 151.7 L411.0 151.6 L411.5 151.8 L412.0 152.2 L412.5 152.7 L413.0 153.4 L413.5 154.4 L414.0 155.4 L414.5 156.4 L415.0 157.5 L415.5 158.6 L416.0 159.6 L416.5 160.6 L417.0 161.4 L417.5 162.2 L418.0 162.9 L418.5 163.6 L419.0 164.2 L419.5 164.7 L420.0 165.2 L420.5 165.6 L421.0 165.9 L421.5 166.1 L422.0 166.1 L422.5 166.3 L423.0 166.2 L423.5 166.3 L424.0 166.4 L424.5 166.3 L425.0 166.3 L425.5 166.2 L426.0 166.1 L426.5 166.1 L427.0 165.9 L427.5 165.9 L428.0 165.9 L428.5 165.8 L429.0 165.7 L429.5 165.7 L430.0 165.6 L430.5 165.5 L431.0 165.5 L431.5 165.4 L432.0 165.3 L432.5 165.3 L433.0 165.2 L433.5 165.2 L434.0 165.1 L434.5 165.0 L435.0 165.0 L435.5 165.1 L436.0 165.2 L436.5 165.2 L437.0 165.4 L437.5 165.4 L438.0 165.4 L438.5 165.3 L439.0 165.3 L439.5 165.3 L440.0 165.3 L440.5 165.4 L441.0 165.4 L441.5 165.5 L442.0 165.4 L442.5 165.4 L443.0 165.5 L443.5 165.4 L444.0 165.4 L444.5 165.3 L445.0 165.3 L445.5 165.3 L446.0 165.3 L446.5 165.1 L447.0 165.1 L447.5 165.1 L448.0 164.9 L448.5 165.0 L449.0 165.0 L449.5 165.0 L450.0 165.0 L450.5 165.1 L451.0 165.0 L451.5 165.0 L452.0 165.0 L452.5 165.0 L453.0 165.0 L453.5 164.9 L454.0 164.9 L454.5 165.0 L455.0 165.0 L455.5 165.0 L456.0 165.0 L456.5 165.1 L457.0 165.1 L457.5 165.1 L458.0 165.1 L458.5 165.3 L459.0 165.2 L459.5 165.3 L460.0 165.3 L460.5 165.4 L461.0 165.3 L461.5 165.4 L462.0 165.3 L462.5 165.3 L463.0 165.3 L463.5 165.4 L464.0 165.4 L464.5 165.5 L465.0 165.6 L465.5 165.7 L466.0 165.6 L466.5 165.6 L467.0 165.5 L467.5 165.5 L468.0 165.4 L468.5 165.2 L469.0 165.1 L469.5 165.2 L470.0 165.0 L470.5 165.0 L471.0 164.9 L471.5 164.9 L472.0 164.9 L472.5 164.8 L473.0 164.9 L473.5 165.0 L474.0 165.0 L474.5 165.1 L475.0 165.1 L475.5 165.1 L476.0 165.0 L476.5 165.0 L477.0 164.8 L477.5 164.8 L478.0 164.8 L478.5 164.8 L479.0 164.9 L479.5 164.8 L480.0 164.9 L480.5 164.9 L481.0 165.0 L481.5 165.1 L482.0 165.2 L482.5 165.3 L483.0 165.4 L483.5 165.6 L484.0 165.5 L484.5 165.5 L485.0 165.4 L485.5 165.2 L486.0 164.9 L486.5 164.7 L487.0 164.3 L487.5 163.8 L488.0 163.4 L488.5 162.7 L489.0 161.8 L489.5 160.9 L490.0 159.7 L490.5 158.3 L491.0 156.6 L491.5 155.0 L492.0 153.1 L492.5 151.0 L493.0 148.9 L493.5 147.0 L494.0 144.9 L494.5 142.9 L495.0 141.2 L495.5 139.8 L496.0 138.8 L496.5 138.1 L497.0 137.8 L497.5 137.9 L498.0 138.5 L498.5 139.5 L499.0 140.6 L499.5 142.3 L500.0 144.0 L500.5 145.9 L501.0 147.8 L501.5 149.8 L502.0 151.7 L502.5 153.5 L503.0 155.1 L503.5 156.7 L504.0 158.0 L504.5 159.2 L505.0 160.2 L505.5 161.0 L506.0 161.6 L506.5 162.1 L507.0 162.5 L507.5 162.7 L508.0 163.0 L508.5 163.2 L509.0 163.5 L509.5 163.6 L510.0 163.9 L510.5 164.0 L511.0 164.1 L511.5 164.3 L512.0 164.2 L512.5 164.4 L513.0 164.4 L513.5 164.5 L514.0 164.7 L514.5 164.8 L515.0 164.9 L515.5 165.0 L516.0 165.2 L516.5 165.2 L517.0 165.4 L517.5 165.5 L518.0 165.5 L518.5 165.6 L519.0 165.6 L519.5 165.7 L520.0 165.7 L520.5 165.8 L521.0 165.8 L521.5 165.8 L522.0 165.9 L522.5 165.8 L523.0 165.9 L523.5 165.8 L524.0 165.8 L524.5 165.9 L525.0 165.8 L525.5 165.8 L526.0 165.8 L526.5 165.7 L527.0 165.6 L527.5 165.5 L528.0 165.4 L528.5 165.4 L529.0 165.3 L529.5 165.2 L530.0 165.2 L530.5 165.0 L531.0 165.0 L531.5 164.9 L532.0 164.9 L532.5 164.9 L533.0 164.8 L533.5 164.8 L534.0 164.7 L534.5 164.6 L535.0 164.6 L535.5 164.6 L536.0 164.6 L536.5 164.6 L537.0 164.4 L537.5 164.5 L538.0 164.5 L538.5 164.4 L539.0 164.3 L539.5 164.3 L540.0 164.2 L540.5 164.2 L541.0 164.2 L541.5 164.2 L542.0 164.1 L542.5 164.0 L543.0 164.0 L543.5 163.8 L544.0 163.8 L544.5 163.8 L545.0 163.8 L545.5 163.8 L546.0 163.9 L546.5 163.8 L547.0 163.9 L547.5 163.8 L548.0 163.8 L548.5 163.7 L549.0 163.7 L549.5 163.7 L550.0 163.8 L550.5 163.8 L551.0 163.8 L551.5 163.7 L552.0 163.8 L552.5 163.8 L553.0 163.7 L553.5 163.7 L554.0 163.8 L554.5 163.8 L555.0 163.8 L555.5 163.9 L556.0 163.9 L556.5 164.0 L557.0 163.9 L557.5 164.1 L558.0 164.0 L558.5 164.0 L559.0 164.1 L559.5 164.0 L560.0 163.9 L560.5 163.7 L561.0 163.5 L561.5 163.2 L562.0 162.9 L562.5 162.5 L563.0 162.0 L563.5 161.3 L564.0 160.5 L564.5 159.4 L565.0 158.3 L565.5 156.8 L566.0 155.2 L566.5 153.3 L567.0 151.2 L567.5 149.0 L568.0 146.5 L568.5 144.0 L569.0 141.1 L569.5 138.3 L570.0 135.4 L570.5 132.6 L571.0 130.2 L571.5 127.8 L572.0 125.9 L572.5 124.2 L573.0 123.0 L573.5 122.4 L574.0 122.1 L574.5 122.3 L575.0 122.9 L575.5 123.9 L576.0 125.6 L576.5 127.5 L577.0 129.6 L577.5 132.1 L578.0 134.6 L578.5 137.3 L579.0 139.9 L579.5 142.5 L580.0 145.0 L580.5 147.5 L581.0 149.6 L581.5 151.5 L582.0 153.3 L582.5 154.9 L583.0 156.1 L583.5 157.4 L584.0 158.4 L584.5 159.1 L585.0 159.9 L585.5 160.5 L586.0 161.1 L586.5 161.6 L587.0 162.0 L587.5 162.5 L588.0 162.8 L588.5 163.2 L589.0 163.5 L589.5 163.8 L590.0 164.1 L590.5 164.4 L591.0 164.6 L591.5 164.8 L592.0 164.9 L592.5 164.9 L593.0 165.0 L593.5 165.1 L594.0 165.1 L594.5 165.1 L595.0 165.0 L595.5 165.1 L596.0 165.1 L596.5 165.1 L597.0 165.1 L597.5 165.1 L598.0 165.0 L598.5 165.1 L599.0 165.0 L599.5 165.0 L600.0 164.9 L600.5 164.9 L601.0 164.9 L601.5 164.7 L602.0 164.6 L602.5 164.5 L603.0 164.5 L603.5 164.4 L604.0 164.4 L604.5 164.3 L605.0 164.1 L605.5 164.1 L606.0 164.0 L606.5 163.9 L607.0 163.8 L607.5 163.7 L608.0 163.8 L608.5 163.7 L609.0 163.7 L609.5 163.7 L610.0 163.6 L610.5 163.6 L611.0 163.7 L611.5 163.8 L612.0 163.7 L612.5 163.9 L613.0 163.9 L613.5 163.9 L614.0 163.9 L614.5 163.9 L615.0 163.9 L615.5 163.8 L616.0 163.9 L616.5 164.0 L617.0 164.2 L617.5 164.3 L618.0 164.3 L618.5 164.5 L619.0 164.6 L619.5 164.6 L620.0 164.7 L620.5 164.8 L621.0 164.8 L621.5 164.8 L622.0 164.8 L622.5 164.8 L623.0 164.8 L623.5 164.7 L624.0 164.7 L624.5 164.7 L625.0 164.7 L625.5 164.7 L626.0 164.6 L626.5 164.6 L627.0 164.5 L627.5 164.5 L628.0 164.6 L628.5 164.4 L629.0 164.3 L629.5 164.3 L630.0 164.2 L630.5 164.0 L631.0 164.0 L631.5 163.8 L632.0 163.6 L632.5 163.3 L633.0 163.0 L633.5 162.8 L634.0 162.4 L634.5 161.9 L635.0 161.3 L635.5 160.6 L636.0 159.8 L636.5 158.7 L637.0 157.5 L637.5 156.0 L638.0 154.2 L638.5 152.3 L639.0 150.0 L639.5 147.6 L640.0 145.1 L640.5 142.6 L641.0 140.0 L641.5 137.4 L642.0 135.0 L642.5 132.6 L643.0 130.4 L643.5 128.5 L644.0 126.9 L644.5 125.6 L645.0 125.0 L645.5 124.7 L646.0 124.9 L646.5 125.7 L647.0 126.6 L647.5 128.1 L648.0 129.9 L648.5 132.0 L649.0 134.3 L649.5 136.8 L650.0 139.4 L650.5 141.9 L651.0 144.5 L651.5 146.9 L652.0 149.1 L652.5 151.1 L653.0 153.1 L653.5 154.8 L654.0 156.4 L654.5 157.7 L655.0 158.8 L655.5 159.6 L656.0 160.4 L656.5 161.0 L657.0 161.4 L657.5 161.8 L658.0 162.0 L658.5 162.2 L659.0 162.5 L659.5 162.6 L660.0 162.7 L660.5 162.8 L661.0 163.0 L661.5 163.3 L662.0 163.4 L662.5 163.6 L663.0 163.7 L663.5 163.9 L664.0 164.1 L664.5 164.2 L665.0 164.4 L665.5 164.5 L666.0 164.7 L666.5 164.7 L667.0 164.8 L667.5 164.9 L668.0 165.0 L668.5 165.2 L669.0 165.3 L669.5 165.5 L670.0 165.5 L670.5 165.6 L671.0 165.5 L671.5 165.5 L672.0 165.5 L672.5 165.6 L673.0 165.6 L673.5 165.6 L674.0 165.5 L674.5 165.4 L675.0 165.4 L675.5 165.3 L676.0 165.3 L676.5 165.3 L677.0 165.3 L677.5 165.4 L678.0 165.6 L678.5 165.6 L679.0 165.6 L679.5 165.7 L680.0 165.6 L680.5 165.6 L681.0 165.6 L681.5 165.6 L682.0 165.7 L682.5 165.5 L683.0 165.4 L683.5 165.4 L684.0 165.2 L684.5 165.2 L685.0 165.0 L685.5 165.0 L686.0 164.8 L686.5 164.8 L687.0 164.7 L687.5 164.5 L688.0 164.5 L688.5 164.4 L689.0 164.4 L689.5 164.5 L690.0 164.5 L690.5 164.7 L691.0 164.7 L691.5 164.8 L692.0 164.7 L692.5 164.7 L693.0 164.9 L693.5 164.8 L694.0 165.0 L694.5 165.0 L695.0 165.2 L695.5 165.1 L696.0 165.2 L696.5 165.2 L697.0 165.2 L697.5 165.3 L698.0 165.5 L698.5 165.6 L699.0 165.7 L699.5 165.8 L700.0 165.9 L700.5 165.8 L701.0 165.8 L701.5 165.7 L702.0 165.6 L702.5 165.7 L703.0 165.6 L703.5 165.5 L704.0 165.5 L704.5 165.4 L705.0 165.5 L705.5 165.4 L706.0 165.4 L706.5 165.3 L707.0 165.4 L707.5 165.5 L708.0 165.5 L708.5 165.5 L709.0 165.4 L709.5 165.3 L710.0 165.4 L710.5 165.2 L711.0 165.2 L711.5 165.0 L712.0 165.1 L712.5 165.0 L713.0 165.1 L713.5 165.2 L714.0 165.2 L714.5 165.1 L715.0 165.3 L715.5 165.2 L716.0 165.2 L716.5 165.1 L717.0 165.1 L717.5 165.2 L718.0 165.1 L718.5 165.0 L719.0 165.0 L719.5 164.9 L720.0 164.8 L720.5 164.8 L721.0 164.7 L721.5 164.7 L722.0 164.7 L722.5 164.8 L723.0 164.8 L723.5 164.8 L724.0 164.7 L724.5 164.8 L725.0 164.7 L725.5 164.8 L726.0 164.7 L726.5 164.8 L727.0 164.8 L727.5 164.7 L728.0 164.7 L728.5 164.7 L729.0 164.7 L729.5 164.6 L730.0 164.7 L730.5 164.6 L731.0 164.6 L731.5 164.7 L732.0 164.7 L732.5 164.8 L733.0 164.7 L733.5 164.7 L734.0 164.8 L734.5 164.7 L735.0 164.6 L735.5 164.7 L736.0 164.6 L736.5 164.6 L737.0 164.7 L737.5 164.6 L738.0 164.7 L738.5 164.7 L739.0 164.6 L739.5 164.6 L740.0 164.7 L740.5 164.6 L741.0 164.6 L741.5 164.5 L742.0 164.6 L742.5 164.6 L743.0 164.7 L743.5 164.9 L744.0 164.9 L744.5 165.1 L745.0 165.2 L745.5 165.2 L746.0 165.3 L746.5 165.3 L747.0 165.3 L747.5 165.3 L748.0 165.4 L748.5 165.4 L749.0 165.4 L749.5 165.5 L750.0 165.5 L750.5 165.4 L751.0 165.4 L751.5 165.5 L752.0 165.5 L752.5 165.6 L753.0 165.6 L753.5 165.6 L754.0 165.6 L754.5 165.7 L755.0 165.6 L755.5 165.7 L756.0 165.8 L756.5 165.8 L757.0 165.7 L757.5 165.8 L758.0 165.7 L758.5 165.6 L759.0 165.6 L759.5 165.5 L760.0 165.5 L760.5 165.5 L761.0 165.5 L761.5 165.6 L762.0 165.8 L762.5 165.8 L763.0 165.8 L763.5 165.7 L764.0 165.6 L764.5 165.5 L765.0 165.4 L765.5 165.1 L766.0 165.0 L766.5 164.8 L767.0 164.6 L767.5 164.3 L768.0 164.0 L768.5 163.6 L769.0 163.0 L769.5 162.4 L770.0 161.7 L770.5 161.0 L771.0 160.2 L771.5 159.2 L772.0 158.2 L772.5 157.3 L773.0 156.2 L773.5 155.2 L774.0 154.3 L774.5 153.3 L775.0 152.6 L775.5 152.0 L776.0 151.7 L776.5 151.4 L777.0 151.4 L777.5 151.6 L778.0 151.9 L778.5 152.4 L779.0 153.0 L779.5 153.8 L780.0 154.6 L780.5 155.6 L781.0 156.6 L781.5 157.6 L782.0 158.5 L782.5 159.4 L783.0 160.2 L783.5 161.1 L784.0 161.8 L784.5 162.5 L785.0 163.1 L785.5 163.7 L786.0 164.2 L786.5 164.6 L787.0 164.9 L787.5 165.1 L788.0 165.2 L788.5 165.3 L789.0 165.2 L789.5 165.3 L790.0 165.4 L790.5 165.3 L791.0 165.4 L791.5 165.4 L792.0 165.4 L792.5 165.5 L793.0 165.4 L793.5 165.4 L794.0 165.3 L794.5 165.3 L795.0 165.4 L795.5 165.4 L796.0 165.4 L796.5 165.4 L797.0 165.4 L797.5 165.4 L798.0 165.4 L798.5 165.4 L799.0 165.5 L799.5 165.5 L800.0 165.4 L800.5 165.4 L801.0 165.4 L801.5 165.4 L802.0 165.4 L802.5 165.5 L803.0 165.5 L803.5 165.5 L804.0 165.5 L804.5 165.5 L805.0 165.5 L805.5 165.4 L806.0 165.4 L806.5 165.3 L807.0 165.3 L807.5 165.1 L808.0 165.2 L808.5 165.0 L809.0 165.1 L809.5 165.0 L810.0 165.0 L810.5 165.1 L811.0 165.0 L811.5 164.9 L812.0 164.9 L812.5 164.8 L813.0 164.8 L813.5 164.8 L814.0 164.9 L814.5 165.0 L815.0 165.1 L815.5 165.2 L816.0 165.3 L816.5 165.3 L817.0 165.3 L817.5 165.3 L818.0 165.3 L818.5 165.2 L819.0 165.1 L819.5 165.0 L820.0 165.0 L820.5 164.9 L821.0 164.9 L821.5 165.0 L822.0 165.0 L822.5 164.9 L823.0 165.0 L823.5 165.0 L824.0 165.2 L824.5 165.3 L825.0 165.5 L825.5 165.6 L826.0 165.7 L826.5 165.9 L827.0 165.8 L827.5 165.8 L828.0 165.9 L828.5 165.9 L829.0 165.9 L829.5 165.8 L830.0 165.7 L830.5 165.6 L831.0 165.3 L831.5 165.0 L832.0 164.7 L832.5 164.2 L833.0 163.6 L833.5 163.0 L834.0 162.2 L834.5 161.4 L835.0 160.4 L835.5 159.3 L836.0 158.2 L836.5 157.1 L837.0 156.0 L837.5 155.0 L838.0 154.1 L838.5 153.3 L839.0 152.7 L839.5 152.2 L840.0 152.1 L840.5 152.2 L841.0 152.6 L841.5 153.1 L842.0 153.9 L842.5 154.9 L843.0 155.9 L843.5 157.0 L844.0 158.3 L844.5 159.4 L845.0 160.4 L845.5 161.3 L846.0 162.3 L846.5 163.1 L847.0 163.8 L847.5 164.4 L848.0 164.9 L848.5 165.2 L849.0 165.4 L849.5 165.7 L850.0 165.9 L850.5 166.0 L851.0 166.1 L851.5 166.2 L852.0 166.3 L852.5 166.3 L853.0 166.3 L853.5 166.4 L854.0 166.3 L854.5 166.2 L855.0 166.2 L855.5 166.2 L856.0 166.1 L856.5 166.1 L857.0 166.0 L857.5 166.0 L858.0 166.1 L858.5 166.0 L859.0 166.0 L859.5 165.9 L860.0 165.9 L860.5 165.9 L861.0 165.8 L861.5 165.9 L862.0 165.8 L862.5 165.9 L863.0 165.9 L863.5 165.9 L864.0 165.9 L864.5 165.9 L865.0 166.0 L865.5 165.9 L866.0 165.8 L866.5 165.8 L867.0 165.8 L867.5 165.8 L868.0 165.7 L868.5 165.7 L869.0 165.5 L869.5 165.5 L870.0 165.5 L870.5 165.4 L871.0 165.3 L871.5 165.2 L872.0 165.1 L872.5 165.0 L873.0 165.1 L873.5 165.3 L874.0 165.4 L874.5 165.5 L875.0 165.4 L875.5 165.2 L876.0 165.0 L876.5 164.9 L877.0 164.7 L877.5 164.6 L878.0 164.4 L878.5 164.4 L879.0 164.2 L879.5 164.2 L880.0 164.3 L880.5 164.2 L881.0 164.2 L881.5 164.3 L882.0 164.3 L882.5 164.3 L883.0 164.4 L883.5 164.4 L884.0 164.3 L884.5 164.4 L885.0 164.3 L885.5 164.3 L886.0 164.3 L886.5 164.2 L887.0 164.2 L887.5 164.2 L888.0 164.0 L888.5 164.0 L889.0 163.8 L889.5 163.8 L890.0 163.8 L890.5 163.6 L891.0 163.6 L891.5 163.4 L892.0 163.2 L892.5 162.9 L893.0 162.6 L893.5 162.2 L894.0 161.7 L894.5 161.1 L895.0 160.4 L895.5 159.7 L896.0 158.7 L896.5 157.7 L897.0 156.7 L897.5 155.8 L898.0 154.9 L898.5 154.0 L899.0 153.5 L899.5 152.9 L900.0 152.5 L900.5 152.5 L901.0 152.5 L901.5 152.8 L902.0 153.3 L902.5 153.8 L903.0 154.7 L903.5 155.6 L904.0 156.6 L904.5 157.6 L905.0 158.7 L905.5 159.8 L906.0 160.7 L906.5 161.7 L907.0 162.4 L907.5 163.2 L908.0 163.7 L908.5 164.2 L909.0 164.6 L909.5 164.9 L910.0 165.3 L910.5 165.4 L911.0 165.6 L911.5 165.7 L912.0 165.7 L912.5 165.7 L913.0 165.7 L913.5 165.6 L914.0 165.6 L914.5 165.4 L915.0 165.3 L915.5 165.3 L916.0 165.2 L916.5 165.4 L917.0 165.4 L917.5 165.6 L918.0 165.7 L918.5 165.7 L919.0 165.8 L919.5 165.8 L920.0 165.9 L920.5 166.0 L921.0 165.9 L921.5 166.0 L922.0 165.9 L922.5 166.0 L923.0 165.9 L923.5 165.9 L924.0 165.7 L924.5 165.6 L925.0 165.6 L925.5 165.6 L926.0 165.6 L926.5 165.8 L927.0 165.8 L927.5 165.9 L928.0 166.0 L928.5 166.0 L929.0 166.1 L929.5 166.2 L930.0 166.2 L930.5 166.3 L931.0 166.3 L931.5 166.4 L932.0 166.4 L932.5 166.3 L933.0 166.1 L933.5 166.0 L934.0 165.8 L934.5 165.6 L935.0 165.6 L935.5 165.5 L936.0 165.4 L936.5 165.3 L937.0 165.3 L937.5 165.3 L938.0 165.2 L938.5 165.2 L939.0 165.0 L939.5 165.0 L940.0 165.0 L940.5 165.1 L941.0 165.1 L941.5 165.2 L942.0 165.2 L942.5 165.2 L943.0 165.2 L943.5 165.1 L944.0 165.1 L944.5 165.0 L945.0 165.0 L945.5 164.9 L946.0 164.9 L946.5 165.0 L947.0 164.9 L947.5 164.8 L948.0 165.0 L948.5 165.0 L949.0 164.9 L949.5 164.8 L950.0 164.9 L950.5 164.7 L951.0 164.5 L951.5 164.4 L952.0 164.2 L952.5 164.2 L953.0 163.9 L953.5 163.8 L954.0 163.6 L954.5 163.2 L955.0 162.9 L955.5 162.4 L956.0 162.0 L956.5 161.6 L957.0 161.0 L957.5 160.5 L958.0 160.2 L958.5 159.8 L959.0 159.5 L959.5 159.3 L960.0 159.1 L960.5 159.1 L961.0 159.2 L961.5 159.4 L962.0 159.6 L962.5 160.0 L963.0 160.4 L963.5 160.8 L964.0 161.4 L964.5 161.7 L965.0 162.2 L965.5 162.5 L966.0 163.0 L966.5 163.3 L967.0 163.5 L967.5 163.8 L968.0 164.1 L968.5 164.2 L969.0 164.3 L969.5 164.4 L970.0 164.5 L970.5 164.5 L971.0 164.5 L971.5 164.4 L972.0 164.3 L972.5 164.2 L973.0 164.3 L973.5 164.3 L974.0 164.4 L974.5 164.5 L975.0 164.6 L975.5 164.7 L976.0 164.9 L976.5 164.8 L977.0 164.9 L977.5 164.9 L978.0 164.8 L978.5 164.9 L979.0 164.8 L979.5 164.7 L980.0 164.6 L980.5 164.5 L981.0 164.3 L981.5 164.3 L982.0 164.3 L982.5 164.3 L983.0 164.5 L983.5 164.6 L984.0 164.6 L984.5 164.7 L985.0 164.8 L985.5 164.8 L986.0 164.8 L986.5 164.9 L987.0 164.9 L987.5 165.0 L988.0 164.9 L988.5 164.9 L989.0 164.9 L989.5 164.9 L990.0 164.9 L990.5 164.9 L991.0 164.9 L991.5 165.0 L992.0 165.1 L992.5 165.2 L993.0 165.1 L993.5 165.3 L994.0 165.4 L994.5 165.5 L995.0 165.6 L995.5 165.9 L996.0 166.0 L996.5 166.1 L997.0 166.2 L997.5 166.1 L998.0 166.1 L998.5 166.0 L999.0 165.8 L999.5 165.7 L1000.0 165.5 L1000.5 165.3 L1001.0 165.2 L1001.5 165.1 L1002.0 165.0 L1002.5 165.1 L1003.0 165.1 L1003.5 165.0 L1004.0 164.9 L1004.5 164.9 L1005.0 164.9 L1005.5 164.9 L1006.0 164.9 L1006.5 165.1 L1007.0 165.2 L1007.5 165.3 L1008.0 165.3 L1008.5 165.4 L1009.0 165.5 L1009.5 165.5 L1010.0 165.5 L1010.5 165.4 L1011.0 165.3 L1011.5 165.2 L1012.0 164.9 L1012.5 164.6 L1013.0 164.5 L1013.5 164.3 L1014.0 164.1 L1014.5 163.9 L1015.0 163.7 L1015.5 163.5 L1016.0 163.2 L1016.5 163.0 L1017.0 162.8 L1017.5 162.7 L1018.0 162.6 L1018.5 162.5 L1019.0 162.6 L1019.5 162.5 L1020.0 162.6 L1020.5 162.8 L1021.0 162.8 L1021.5 163.0 L1022.0 163.3 L1022.5 163.5 L1023.0 163.7 L1023.5 163.8 L1024.0 164.0 L1024.5 164.2 L1025.0 164.3 L1025.5 164.4 L1026.0 164.5 L1026.5 164.7 L1027.0 164.8 L1027.5 164.9 L1028.0 164.9 L1028.5 165.0 L1029.0 165.1 L1029.5 165.1 L1030.0 165.2 L1030.5 165.1 L1031.0 165.1 L1031.5 165.0 L1032.0 165.0 L1032.5 164.9 L1033.0 164.9 L1033.5 164.9 L1034.0 164.9 L1034.5 164.9 L1035.0 165.0 L1035.5 165.0 L1036.0 165.0 L1036.5 165.0 L1037.0 165.1 L1037.5 165.1 L1038.0 165.2 L1038.5 165.2 L1039.0 165.3 L1039.5 165.3 L1040.0 165.2 L1040.5 165.1 L1041.0 165.1 L1041.5 165.0 L1042.0 165.0 L1042.5 164.9 L1043.0 164.9 L1043.5 164.9 L1044.0 164.8 L1044.5 164.8 L1045.0 164.8 L1045.5 164.6 L1046.0 164.4 L1046.5 164.3 L1047.0 164.1 L1047.5 164.0 L1048.0 163.8 L1048.5 163.8 L1049.0 163.7 L1049.5 163.7 L1050.0 163.7 L1050.5 163.7 L1051.0 163.9 L1051.5 163.9 L1052.0 164.0 L1052.5 164.3 L1053.0 164.4 L1053.5 164.6 L1054.0 164.8 L1054.5 164.9 L1055.0 165.1 L1055.5 165.5 L1056.0 165.8 L1056.5 166.0 L1057.0 165.4 L1057.5 164.4 L1058.0 163.4 L1058.5 162.9 L1059.0 164.2 L1059.5 165.9 L1060.0 166.0 L1060.5 164.7 L1061.0 163.9 L1061.5 164.8 L1062.0 166.3 L1062.5 166.8" stroke="#ffffff" stroke-width="1" fill="none"/></svg></div><div style="left:16px;top:189px;width:1047px;height:377px;background:#000;border-left:1px solid #555;overflow:hidden"><svg width="1047" height="378" viewBox="16 189 1047 377" style="left:-1px;top:0"><path d="M16.0 559.8 L16.5 558.3 L17.0 556.8 L17.5 555.1 L18.0 554.6 L18.5 557.4 L19.0 563.2 L19.5 563.6 L20.0 563.9 L20.5 563.7 L21.0 563.7 L21.5 563.4 L22.0 562.9 L22.5 562.2 L23.0 561.9 L23.5 561.1 L24.0 560.9 L24.5 560.5 L25.0 559.7 L25.5 559.7 L26.0 559.8 L26.5 559.8 L27.0 559.5 L27.5 559.3 L28.0 559.1 L28.5 559.2 L29.0 558.6 L29.5 558.5 L30.0 558.0 L30.5 557.9 L31.0 557.9 L31.5 557.3 L32.0 557.4 L32.5 556.9 L33.0 556.8 L33.5 556.5 L34.0 556.1 L34.5 556.3 L35.0 556.1 L35.5 556.0 L36.0 556.0 L36.5 556.3 L37.0 556.2 L37.5 556.0 L38.0 555.7 L38.5 555.5 L39.0 555.2 L39.5 555.2 L40.0 554.7 L40.5 555.0 L41.0 555.1 L41.5 554.9 L42.0 555.4 L42.5 555.3 L43.0 555.4 L43.5 555.0 L44.0 554.9 L44.5 554.7 L45.0 554.8 L45.5 554.4 L46.0 554.2 L46.5 554.2 L47.0 554.2 L47.5 554.1 L48.0 554.1 L48.5 554.5 L49.0 554.2 L49.5 554.6 L50.0 554.5 L50.5 554.8 L51.0 555.3 L51.5 555.5 L52.0 555.9 L52.5 556.5 L53.0 556.8 L53.5 557.1 L54.0 557.4 L54.5 557.7 L55.0 557.8 L55.5 557.5 L56.0 557.2 L56.5 556.4 L57.0 556.3 L57.5 555.8 L58.0 555.7 L58.5 555.6 L59.0 555.6 L59.5 555.7 L60.0 556.4 L60.5 556.5 L61.0 557.1 L61.5 557.5 L62.0 558.0 L62.5 558.7 L63.0 559.2 L63.5 559.1 L64.0 559.3 L64.5 559.1 L65.0 559.2 L65.5 559.1 L66.0 559.0 L66.5 558.9 L67.0 558.7 L67.5 558.8 L68.0 558.3 L68.5 557.8 L69.0 557.8 L69.5 557.6 L70.0 557.1 L70.5 556.9 L71.0 556.9 L71.5 556.8 L72.0 557.0 L72.5 556.9 L73.0 557.1 L73.5 557.3 L74.0 557.8 L74.5 558.4 L75.0 558.8 L75.5 559.0 L76.0 559.3 L76.5 559.4 L77.0 559.3 L77.5 559.0 L78.0 558.7 L78.5 558.6 L79.0 559.0 L79.5 558.8 L80.0 559.4 L80.5 559.9 L81.0 560.4 L81.5 560.4 L82.0 560.6 L82.5 560.5 L83.0 560.4 L83.5 560.2 L84.0 560.2 L84.5 559.9 L85.0 559.8 L85.5 559.3 L86.0 559.2 L86.5 559.4 L87.0 559.4 L87.5 559.1 L88.0 559.0 L88.5 558.7 L89.0 558.8 L89.5 559.0 L90.0 558.9 L90.5 558.8 L91.0 558.9 L91.5 558.5 L92.0 558.5 L92.5 558.5 L93.0 558.8 L93.5 559.0 L94.0 559.1 L94.5 559.1 L95.0 559.3 L95.5 559.7 L96.0 559.9 L96.5 560.3 L97.0 560.3 L97.5 560.8 L98.0 560.5 L98.5 560.8 L99.0 560.6 L99.5 560.4 L100.0 560.4 L100.5 560.7 L101.0 561.2 L101.5 561.6 L102.0 561.6 L102.5 561.8 L103.0 562.1 L103.5 562.2 L104.0 562.1 L104.5 562.0 L105.0 562.2 L105.5 561.9 L106.0 562.0 L106.5 562.0 L107.0 562.1 L107.5 561.8 L108.0 561.7 L108.5 561.3 L109.0 561.1 L109.5 561.0 L110.0 561.3 L110.5 561.2 L111.0 560.9 L111.5 560.7 L112.0 560.9 L112.5 560.8 L113.0 560.4 L113.5 560.0 L114.0 559.9 L114.5 559.7 L115.0 559.2 L115.5 559.0 L116.0 559.1 L116.5 559.0 L117.0 559.0 L117.5 558.7 L118.0 558.9 L118.5 558.8 L119.0 558.7 L119.5 558.5 L120.0 558.9 L120.5 558.6 L121.0 558.8 L121.5 558.5 L122.0 558.6 L122.5 559.0 L123.0 558.9 L123.5 559.3 L124.0 559.1 L124.5 558.8 L125.0 558.7 L125.5 558.7 L126.0 558.6 L126.5 558.6 L127.0 558.1 L127.5 558.2 L128.0 558.0 L128.5 558.3 L129.0 557.8 L129.5 557.7 L130.0 557.7 L130.5 557.8 L131.0 558.2 L131.5 558.3 L132.0 558.3 L132.5 558.5 L133.0 558.5 L133.5 558.2 L134.0 558.1 L134.5 558.5 L135.0 558.4 L135.5 558.0 L136.0 558.5 L136.5 558.5 L137.0 558.6 L137.5 558.7 L138.0 558.8 L138.5 558.9 L139.0 559.2 L139.5 559.5 L140.0 560.1 L140.5 560.1 L141.0 560.8 L141.5 560.7 L142.0 560.9 L142.5 561.1 L143.0 560.9 L143.5 560.6 L144.0 560.2 L144.5 560.2 L145.0 559.9 L145.5 559.9 L146.0 559.2 L146.5 558.9 L147.0 558.8 L147.5 558.0 L148.0 557.9 L148.5 558.1 L149.0 558.1 L149.5 557.8 L150.0 557.9 L150.5 558.0 L151.0 558.5 L151.5 558.1 L152.0 558.4 L152.5 558.4 L153.0 558.2 L153.5 558.1 L154.0 558.5 L154.5 558.4 L155.0 558.4 L155.5 558.8 L156.0 558.9 L156.5 559.0 L157.0 559.0 L157.5 559.4 L158.0 559.5 L158.5 559.4 L159.0 559.6 L159.5 559.2 L160.0 559.3 L160.5 559.6 L161.0 559.9 L161.5 560.0 L162.0 559.7 L162.5 559.8 L163.0 560.0 L163.5 560.3 L164.0 560.8 L164.5 560.8 L165.0 561.4 L165.5 561.6 L166.0 561.7 L166.5 561.5 L167.0 561.0 L167.5 560.4 L168.0 559.9 L168.5 559.4 L169.0 559.2 L169.5 558.5 L170.0 558.2 L170.5 557.9 L171.0 556.9 L171.5 555.8 L172.0 554.3 L172.5 552.6 L173.0 550.0 L173.5 547.2 L174.0 543.3 L174.5 538.5 L175.0 532.1 L175.5 524.7 L176.0 515.8 L176.5 505.7 L177.0 493.9 L177.5 480.4 L178.0 465.6 L178.5 449.9 L179.0 433.0 L179.5 415.4 L180.0 397.2 L180.5 379.0 L181.0 361.0 L181.5 343.7 L182.0 328.4 L182.5 314.4 L183.0 303.3 L183.5 294.9 L184.0 290.0 L184.5 288.1 L185.0 290.0 L185.5 295.4 L186.0 303.8 L186.5 315.4 L187.0 328.9 L187.5 344.3 L188.0 361.3 L188.5 379.6 L189.0 397.8 L189.5 416.0 L190.0 434.2 L190.5 451.1 L191.0 467.2 L191.5 481.2 L192.0 494.5 L192.5 506.2 L193.0 516.3 L193.5 525.1 L194.0 532.1 L194.5 538.4 L195.0 543.4 L195.5 547.5 L196.0 551.1 L196.5 553.4 L197.0 555.3 L197.5 556.3 L198.0 557.5 L198.5 558.0 L199.0 558.6 L199.5 559.4 L200.0 560.0 L200.5 560.0 L201.0 560.6 L201.5 560.9 L202.0 560.8 L202.5 560.8 L203.0 560.7 L203.5 560.6 L204.0 560.5 L204.5 560.6 L205.0 560.6 L205.5 560.3 L206.0 560.2 L206.5 560.4 L207.0 560.6 L207.5 560.5 L208.0 560.7 L208.5 560.7 L209.0 561.1 L209.5 561.1 L210.0 560.9 L210.5 561.1 L211.0 561.4 L211.5 561.7 L212.0 562.0 L212.5 562.1 L213.0 562.5 L213.5 563.0 L214.0 563.1 L214.5 563.2 L215.0 563.4 L215.5 564.0 L216.0 563.8 L216.5 564.1 L217.0 564.1 L217.5 564.2 L218.0 564.4 L218.5 564.3 L219.0 563.8 L219.5 563.5 L220.0 563.4 L220.5 562.7 L221.0 562.2 L221.5 562.2 L222.0 561.6 L222.5 561.3 L223.0 560.5 L223.5 560.1 L224.0 559.0 L224.5 558.0 L225.0 557.1 L225.5 556.7 L226.0 556.4 L226.5 556.5 L227.0 556.3 L227.5 556.9 L228.0 557.3 L228.5 557.9 L229.0 558.2 L229.5 558.6 L230.0 559.1 L230.5 559.7 L231.0 559.6 L231.5 560.4 L232.0 561.1 L232.5 561.9 L233.0 562.1 L233.5 562.5 L234.0 563.2 L234.5 563.4 L235.0 563.3 L235.5 563.1 L236.0 563.5 L236.5 563.2 L237.0 563.4 L237.5 563.2 L238.0 563.3 L238.5 562.9 L239.0 563.0 L239.5 562.5 L240.0 562.3 L240.5 562.3 L241.0 562.1 L241.5 561.7 L242.0 561.6 L242.5 561.6 L243.0 561.6 L243.5 561.4 L244.0 561.1 L244.5 561.0 L245.0 561.1 L245.5 561.1 L246.0 560.5 L246.5 560.6 L247.0 560.4 L247.5 559.7 L248.0 559.5 L248.5 558.5 L249.0 558.1 L249.5 557.5 L250.0 557.0 L250.5 556.5 L251.0 556.2 L251.5 556.0 L252.0 555.6 L252.5 555.3 L253.0 554.7 L253.5 554.0 L254.0 552.8 L254.5 551.9 L255.0 550.6 L255.5 549.1 L256.0 548.2 L256.5 547.0 L257.0 545.8 L257.5 544.8 L258.0 544.2 L258.5 543.6 L259.0 543.5 L259.5 543.9 L260.0 544.3 L260.5 545.2 L261.0 546.2 L261.5 547.0 L262.0 548.5 L262.5 549.5 L263.0 551.3 L263.5 552.7 L264.0 553.8 L264.5 554.6 L265.0 555.5 L265.5 555.7 L266.0 556.1 L266.5 555.7 L267.0 556.0 L267.5 556.0 L268.0 555.8 L268.5 555.9 L269.0 555.6 L269.5 556.0 L270.0 555.7 L270.5 555.8 L271.0 555.6 L271.5 555.0 L272.0 554.9 L272.5 554.5 L273.0 553.6 L273.5 553.2 L274.0 552.9 L274.5 552.1 L275.0 552.3 L275.5 551.8 L276.0 552.0 L276.5 551.6 L277.0 551.6 L277.5 551.5 L278.0 550.8 L278.5 550.4 L279.0 550.2 L279.5 550.0 L280.0 550.0 L280.5 550.6 L281.0 551.2 L281.5 552.3 L282.0 553.0 L282.5 553.9 L283.0 554.2 L283.5 555.1 L284.0 555.3 L284.5 556.0 L285.0 556.5 L285.5 556.9 L286.0 557.6 L286.5 557.8 L287.0 558.3 L287.5 558.9 L288.0 558.8 L288.5 559.4 L289.0 559.2 L289.5 559.0 L290.0 559.0 L290.5 558.5 L291.0 558.6 L291.5 558.1 L292.0 557.7 L292.5 557.6 L293.0 557.2 L293.5 556.8 L294.0 556.8 L294.5 556.3 L295.0 556.5 L295.5 556.0 L296.0 555.9 L296.5 555.8 L297.0 555.4 L297.5 555.3 L298.0 555.2 L298.5 555.0 L299.0 554.8 L299.5 554.4 L300.0 553.6 L300.5 551.9 L301.0 549.4 L301.5 546.2 L302.0 541.2 L302.5 535.2 L303.0 527.5 L303.5 517.3 L304.0 505.0 L304.5 490.5 L305.0 473.1 L305.5 453.3 L306.0 430.7 L306.5 406.1 L307.0 379.5 L307.5 351.5 L308.0 323.8 L308.5 296.7 L309.0 271.3 L309.5 249.5 L310.0 230.9 L310.5 217.5 L311.0 209.4 L311.5 207.6 L312.0 211.7 L312.5 221.5 L313.0 236.7 L313.5 256.6 L314.0 280.2 L314.5 306.7 L315.0 334.4 L315.5 362.4 L316.0 390.1 L316.5 416.2 L317.0 440.7 L317.5 462.5 L318.0 481.5 L318.5 498.3 L319.0 511.8 L319.5 523.4 L320.0 532.5 L320.5 539.7 L321.0 545.2 L321.5 549.8 L322.0 552.6 L322.5 555.2 L323.0 557.2 L323.5 558.1 L324.0 559.1 L324.5 559.9 L325.0 560.4 L325.5 560.7 L326.0 561.1 L326.5 561.0 L327.0 561.3 L327.5 561.5 L328.0 561.5 L328.5 562.0 L329.0 562.0 L329.5 562.1 L330.0 562.1 L330.5 562.9 L331.0 563.1 L331.5 562.9 L332.0 563.0 L332.5 562.7 L333.0 562.5 L333.5 562.4 L334.0 562.4 L334.5 562.4 L335.0 562.6 L335.5 563.0 L336.0 563.1 L336.5 563.2 L337.0 563.1 L337.5 562.8 L338.0 562.7 L338.5 562.5 L339.0 562.4 L339.5 562.0 L340.0 561.5 L340.5 561.3 L341.0 561.0 L341.5 560.2 L342.0 560.0 L342.5 558.9 L343.0 558.4 L343.5 557.7 L344.0 557.3 L344.5 556.9 L345.0 556.2 L345.5 555.5 L346.0 555.2 L346.5 554.4 L347.0 553.8 L347.5 553.6 L348.0 553.1 L348.5 553.0 L349.0 553.1 L349.5 553.6 L350.0 553.8 L350.5 554.5 L351.0 555.0 L351.5 555.6 L352.0 556.0 L352.5 556.7 L353.0 557.1 L353.5 557.4 L354.0 557.7 L354.5 558.3 L355.0 558.4 L355.5 559.2 L356.0 559.2 L356.5 559.4 L357.0 559.8 L357.5 560.4 L358.0 560.4 L358.5 560.3 L359.0 560.2 L359.5 560.0 L360.0 560.1 L360.5 559.9 L361.0 559.9 L361.5 560.0 L362.0 559.9 L362.5 560.5 L363.0 560.8 L363.5 561.2 L364.0 561.3 L364.5 561.2 L365.0 560.7 L365.5 561.0 L366.0 560.9 L366.5 560.8 L367.0 560.4 L367.5 560.4 L368.0 560.3 L368.5 560.3 L369.0 560.8 L369.5 560.8 L370.0 560.8 L370.5 560.9 L371.0 560.9 L371.5 560.8 L372.0 560.8 L372.5 560.9 L373.0 561.3 L373.5 561.1 L374.0 561.2 L374.5 561.2 L375.0 560.9 L375.5 561.0 L376.0 561.1 L376.5 561.4 L377.0 561.3 L377.5 561.3 L378.0 561.7 L378.5 561.5 L379.0 561.6 L379.5 561.4 L380.0 560.9 L380.5 560.8 L381.0 560.5 L381.5 560.3 L382.0 559.7 L382.5 559.6 L383.0 559.4 L383.5 559.1 L384.0 559.2 L384.5 558.6 L385.0 558.7 L385.5 557.9 L386.0 557.3 L386.5 556.8 L387.0 556.5 L387.5 556.2 L388.0 555.4 L388.5 555.5 L389.0 555.5 L389.5 555.7 L390.0 555.5 L390.5 555.8 L391.0 556.0 L391.5 556.6 L392.0 556.7 L392.5 557.4 L393.0 557.5 L393.5 557.9 L394.0 558.5 L394.5 558.7 L395.0 558.8 L395.5 559.4 L396.0 559.5 L396.5 560.2 L397.0 560.5 L397.5 560.9 L398.0 561.2 L398.5 561.4 L399.0 561.6 L399.5 561.6 L400.0 561.7 L400.5 560.8 L401.0 560.4 L401.5 559.0 L402.0 557.9 L402.5 556.4 L403.0 555.0 L403.5 552.8 L404.0 550.4 L404.5 547.9 L405.0 544.6 L405.5 541.3 L406.0 537.8 L406.5 534.2 L407.0 530.5 L407.5 526.8 L408.0 523.1 L408.5 519.9 L409.0 517.0 L409.5 515.0 L410.0 513.2 L410.5 512.3 L411.0 511.8 L411.5 512.4 L412.0 513.9 L412.5 515.8 L413.0 518.2 L413.5 521.5 L414.0 525.3 L414.5 528.7 L415.0 532.5 L415.5 536.3 L416.0 540.0 L416.5 543.5 L417.0 546.2 L417.5 549.0 L418.0 551.6 L418.5 554.0 L419.0 556.2 L419.5 558.0 L420.0 559.7 L420.5 561.0 L421.0 562.3 L421.5 562.8 L422.0 562.8 L422.5 563.5 L423.0 563.2 L423.5 563.4 L424.0 563.7 L424.5 563.6 L425.0 563.4 L425.5 563.1 L426.0 562.7 L426.5 562.7 L427.0 562.2 L427.5 562.1 L428.0 562.0 L428.5 561.6 L429.0 561.6 L429.5 561.5 L430.0 561.2 L430.5 560.8 L431.0 560.6 L431.5 560.3 L432.0 559.9 L432.5 559.9 L433.0 559.5 L433.5 559.5 L434.0 559.4 L434.5 559.0 L435.0 559.1 L435.5 559.4 L436.0 559.6 L436.5 559.8 L437.0 560.3 L437.5 560.4 L438.0 560.3 L438.5 560.1 L439.0 560.1 L439.5 560.0 L440.0 560.2 L440.5 560.3 L441.0 560.4 L441.5 560.7 L442.0 560.4 L442.5 560.5 L443.0 560.6 L443.5 560.5 L444.0 560.4 L444.5 560.2 L445.0 560.2 L445.5 560.0 L446.0 559.9 L446.5 559.5 L447.0 559.3 L447.5 559.2 L448.0 558.8 L448.5 559.0 L449.0 559.1 L449.5 558.9 L450.0 559.0 L450.5 559.3 L451.0 558.9 L451.5 559.1 L452.0 558.9 L452.5 559.1 L453.0 559.0 L453.5 558.7 L454.0 558.5 L454.5 558.9 L455.0 558.9 L455.5 559.1 L456.0 559.1 L456.5 559.2 L457.0 559.4 L457.5 559.3 L458.0 559.4 L458.5 559.9 L459.0 559.7 L459.5 560.1 L460.0 560.0 L460.5 560.3 L461.0 560.0 L461.5 560.4 L462.0 560.1 L462.5 560.0 L463.0 560.1 L463.5 560.3 L464.0 560.3 L464.5 560.7 L465.0 561.0 L465.5 561.3 L466.0 561.2 L466.5 561.0 L467.0 560.7 L467.5 560.6 L468.0 560.3 L468.5 559.8 L469.0 559.4 L469.5 559.5 L470.0 559.1 L470.5 558.8 L471.0 558.6 L471.5 558.7 L472.0 558.5 L472.5 558.4 L473.0 558.5 L473.5 558.8 L474.0 558.9 L474.5 559.4 L475.0 559.2 L475.5 559.2 L476.0 559.0 L476.5 558.8 L477.0 558.4 L477.5 558.2 L478.0 558.3 L478.5 558.2 L479.0 558.6 L479.5 558.4 L480.0 558.7 L480.5 558.6 L481.0 558.9 L481.5 559.2 L482.0 559.7 L482.5 560.1 L483.0 560.4 L483.5 561.0 L484.0 560.9 L484.5 560.7 L485.0 560.3 L485.5 559.7 L486.0 558.7 L486.5 557.7 L487.0 556.4 L487.5 554.8 L488.0 553.2 L488.5 550.9 L489.0 547.6 L489.5 544.5 L490.0 540.3 L490.5 535.3 L491.0 529.5 L491.5 523.7 L492.0 517.1 L492.5 509.7 L493.0 502.4 L493.5 495.5 L494.0 488.2 L494.5 481.3 L495.0 475.2 L495.5 470.3 L496.0 466.6 L496.5 464.4 L497.0 463.2 L497.5 463.6 L498.0 465.8 L498.5 469.0 L499.0 473.2 L499.5 479.0 L500.0 485.0 L500.5 491.6 L501.0 498.3 L501.5 505.3 L502.0 512.0 L502.5 518.5 L503.0 524.1 L503.5 529.8 L504.0 534.4 L504.5 538.6 L505.0 541.9 L505.5 544.9 L506.0 547.0 L506.5 548.6 L507.0 550.0 L507.5 551.0 L508.0 552.0 L508.5 552.6 L509.0 553.5 L509.5 554.1 L510.0 554.9 L510.5 555.5 L511.0 556.0 L511.5 556.4 L512.0 556.3 L512.5 556.9 L513.0 557.0 L513.5 557.4 L514.0 557.7 L514.5 558.3 L515.0 558.5 L515.5 559.0 L516.0 559.8 L516.5 559.8 L517.0 560.5 L517.5 560.8 L518.0 560.7 L518.5 561.1 L519.0 561.2 L519.5 561.5 L520.0 561.4 L520.5 561.9 L521.0 561.8 L521.5 561.9 L522.0 562.2 L522.5 561.7 L523.0 562.0 L523.5 561.9 L524.0 561.8 L524.5 562.2 L525.0 561.9 L525.5 561.9 L526.0 561.7 L526.5 561.5 L527.0 561.0 L527.5 560.8 L528.0 560.5 L528.5 560.3 L529.0 560.2 L529.5 559.6 L530.0 559.6 L530.5 559.1 L531.0 558.9 L531.5 558.6 L532.0 558.5 L532.5 558.6 L533.0 558.3 L533.5 558.2 L534.0 557.8 L534.5 557.7 L535.0 557.5 L535.5 557.5 L536.0 557.4 L536.5 557.4 L537.0 556.9 L537.5 557.1 L538.0 557.1 L538.5 556.8 L539.0 556.4 L539.5 556.4 L540.0 556.1 L540.5 556.1 L541.0 556.3 L541.5 556.0 L542.0 555.8 L542.5 555.5 L543.0 555.3 L543.5 554.9 L544.0 554.7 L544.5 554.7 L545.0 554.8 L545.5 554.8 L546.0 554.9 L546.5 554.7 L547.0 555.0 L547.5 554.8 L548.0 554.9 L548.5 554.5 L549.0 554.5 L549.5 554.4 L550.0 554.7 L550.5 554.8 L551.0 554.7 L551.5 554.5 L552.0 554.6 L552.5 554.6 L553.0 554.6 L553.5 554.5 L554.0 554.7 L554.5 554.8 L555.0 554.9 L555.5 555.1 L556.0 555.3 L556.5 555.5 L557.0 555.2 L557.5 555.6 L558.0 555.5 L558.5 555.5 L559.0 555.8 L559.5 555.4 L560.0 555.2 L560.5 554.5 L561.0 553.6 L561.5 552.8 L562.0 551.7 L562.5 550.3 L563.0 548.5 L563.5 545.9 L564.0 543.0 L564.5 539.4 L565.0 535.3 L565.5 530.1 L566.0 524.3 L566.5 517.7 L567.0 510.5 L567.5 502.8 L568.0 493.8 L568.5 484.9 L569.0 474.7 L569.5 465.1 L570.0 454.7 L570.5 445.0 L571.0 436.4 L571.5 428.0 L572.0 421.3 L572.5 415.5 L573.0 411.2 L573.5 409.0 L574.0 407.9 L574.5 408.6 L575.0 410.9 L575.5 414.5 L576.0 420.1 L576.5 426.8 L577.0 434.4 L577.5 443.1 L578.0 451.8 L578.5 461.5 L579.0 470.8 L579.5 479.7 L580.0 488.6 L580.5 497.2 L581.0 504.9 L581.5 511.4 L582.0 517.6 L582.5 523.3 L583.0 527.8 L583.5 532.3 L584.0 535.6 L584.5 538.4 L585.0 541.0 L585.5 543.3 L586.0 545.2 L586.5 547.1 L587.0 548.4 L587.5 550.2 L588.0 551.3 L588.5 552.7 L589.0 553.8 L589.5 554.8 L590.0 555.7 L590.5 556.8 L591.0 557.6 L591.5 558.1 L592.0 558.5 L592.5 558.7 L593.0 558.8 L593.5 559.3 L594.0 559.3 L594.5 559.3 L595.0 559.0 L595.5 559.2 L596.0 559.4 L596.5 559.4 L597.0 559.3 L597.5 559.2 L598.0 559.1 L598.5 559.2 L599.0 558.8 L599.5 558.9 L600.0 558.7 L600.5 558.7 L601.0 558.4 L601.5 557.9 L602.0 557.5 L602.5 557.3 L603.0 557.1 L603.5 556.9 L604.0 556.8 L604.5 556.5 L605.0 555.7 L605.5 555.7 L606.0 555.4 L606.5 555.1 L607.0 554.7 L607.5 554.4 L608.0 554.6 L608.5 554.5 L609.0 554.4 L609.5 554.5 L610.0 554.2 L610.5 554.1 L611.0 554.4 L611.5 554.6 L612.0 554.5 L612.5 555.0 L613.0 555.3 L613.5 555.0 L614.0 555.2 L614.5 555.1 L615.0 554.9 L615.5 554.8 L616.0 555.0 L616.5 555.6 L617.0 556.0 L617.5 556.3 L618.0 556.6 L618.5 557.4 L619.0 557.6 L619.5 557.5 L620.0 557.9 L620.5 558.3 L621.0 558.4 L621.5 558.3 L622.0 558.4 L622.5 558.4 L623.0 558.1 L623.5 558.0 L624.0 557.9 L624.5 558.1 L625.0 557.8 L625.5 557.8 L626.0 557.6 L626.5 557.6 L627.0 557.3 L627.5 557.1 L628.0 557.4 L628.5 556.9 L629.0 556.5 L629.5 556.4 L630.0 556.2 L630.5 555.5 L631.0 555.3 L631.5 554.7 L632.0 554.1 L632.5 553.1 L633.0 552.0 L633.5 551.3 L634.0 549.8 L634.5 547.9 L635.0 546.0 L635.5 543.4 L636.0 540.7 L636.5 536.9 L637.0 532.7 L637.5 527.2 L638.0 521.1 L638.5 514.1 L639.0 506.1 L639.5 497.7 L640.0 489.1 L640.5 480.1 L641.0 470.9 L641.5 461.8 L642.0 453.2 L642.5 445.0 L643.0 437.1 L643.5 430.5 L644.0 425.0 L644.5 420.5 L645.0 418.2 L645.5 417.2 L646.0 417.8 L646.5 420.5 L647.0 423.8 L647.5 429.1 L648.0 435.4 L648.5 442.9 L649.0 451.0 L649.5 459.6 L650.0 468.7 L650.5 477.6 L651.0 486.9 L651.5 495.3 L652.0 502.9 L652.5 510.2 L653.0 517.0 L653.5 523.2 L654.0 528.8 L654.5 533.4 L655.0 537.2 L655.5 539.9 L656.0 542.8 L656.5 544.7 L657.0 546.3 L657.5 547.7 L658.0 548.3 L658.5 549.2 L659.0 550.1 L659.5 550.7 L660.0 551.0 L660.5 551.3 L661.0 552.1 L661.5 552.8 L662.0 553.2 L662.5 553.9 L663.0 554.5 L663.5 555.1 L664.0 555.8 L664.5 556.2 L665.0 556.8 L665.5 557.2 L666.0 557.9 L666.5 557.8 L667.0 558.4 L667.5 558.4 L668.0 558.8 L668.5 559.7 L669.0 559.9 L669.5 560.6 L670.0 560.8 L670.5 560.9 L671.0 560.6 L671.5 560.8 L672.0 560.7 L672.5 561.1 L673.0 561.1 L673.5 561.0 L674.0 560.7 L674.5 560.4 L675.0 560.4 L675.5 560.1 L676.0 560.1 L676.5 559.9 L677.0 560.2 L677.5 560.4 L678.0 561.0 L678.5 561.1 L679.0 561.0 L679.5 561.4 L680.0 561.1 L680.5 561.2 L681.0 561.1 L681.5 561.1 L682.0 561.3 L682.5 560.8 L683.0 560.4 L683.5 560.2 L684.0 559.7 L684.5 559.6 L685.0 558.9 L685.5 559.0 L686.0 558.2 L686.5 558.2 L687.0 557.8 L687.5 557.2 L688.0 557.2 L688.5 557.0 L689.0 557.0 L689.5 557.1 L690.0 557.3 L690.5 557.8 L691.0 558.0 L691.5 558.2 L692.0 557.9 L692.5 558.1 L693.0 558.5 L693.5 558.2 L694.0 558.8 L694.5 558.9 L695.0 559.5 L695.5 559.3 L696.0 559.8 L696.5 559.8 L697.0 559.8 L697.5 560.0 L698.0 560.8 L698.5 561.0 L699.0 561.3 L699.5 561.7 L700.0 562.1 L700.5 561.7 L701.0 561.7 L701.5 561.3 L702.0 561.2 L702.5 561.3 L703.0 561.2 L703.5 560.8 L704.0 560.6 L704.5 560.5 L705.0 560.6 L705.5 560.5 L706.0 560.3 L706.5 560.2 L707.0 560.4 L707.5 560.6 L708.0 560.7 L708.5 560.6 L709.0 560.4 L709.5 560.2 L710.0 560.3 L710.5 559.8 L711.0 559.7 L711.5 559.1 L712.0 559.3 L712.5 559.1 L713.0 559.4 L713.5 559.6 L714.0 559.5 L714.5 559.4 L715.0 559.9 L715.5 559.6 L716.0 559.8 L716.5 559.4 L717.0 559.3 L717.5 559.6 L718.0 559.3 L718.5 559.1 L719.0 559.0 L719.5 558.8 L720.0 558.2 L720.5 558.2 L721.0 558.1 L721.5 558.1 L722.0 557.9 L722.5 558.2 L723.0 558.2 L723.5 558.2 L724.0 557.9 L724.5 558.1 L725.0 557.9 L725.5 558.1 L726.0 557.7 L726.5 558.1 L727.0 558.2 L727.5 557.9 L728.0 557.9 L728.5 557.8 L729.0 557.8 L729.5 557.5 L730.0 557.9 L730.5 557.6 L731.0 557.7 L731.5 557.8 L732.0 558.0 L732.5 558.4 L733.0 558.0 L733.5 558.0 L734.0 558.2 L734.5 557.8 L735.0 557.6 L735.5 557.7 L736.0 557.7 L736.5 557.7 L737.0 557.8 L737.5 557.6 L738.0 558.0 L738.5 558.0 L739.0 557.7 L739.5 557.7 L740.0 557.8 L740.5 557.7 L741.0 557.5 L741.5 557.3 L742.0 557.4 L742.5 557.4 L743.0 557.9 L743.5 558.5 L744.0 558.6 L744.5 559.3 L745.0 559.7 L745.5 559.6 L746.0 560.1 L746.5 560.1 L747.0 559.9 L747.5 560.0 L748.0 560.3 L748.5 560.2 L749.0 560.3 L749.5 560.7 L750.0 560.7 L750.5 560.5 L751.0 560.5 L751.5 560.6 L752.0 560.8 L752.5 561.1 L753.0 561.1 L753.5 561.2 L754.0 561.2 L754.5 561.3 L755.0 561.0 L755.5 561.4 L756.0 561.8 L756.5 561.9 L757.0 561.6 L757.5 561.6 L758.0 561.5 L758.5 561.2 L759.0 561.1 L759.5 560.7 L760.0 560.8 L760.5 560.9 L761.0 560.8 L761.5 561.0 L762.0 561.6 L762.5 561.6 L763.0 561.7 L763.5 561.4 L764.0 561.1 L764.5 560.8 L765.0 560.3 L765.5 559.3 L766.0 559.1 L766.5 558.2 L767.0 557.6 L767.5 556.4 L768.0 555.3 L768.5 554.0 L769.0 552.0 L769.5 549.7 L770.0 547.5 L770.5 544.7 L771.0 542.0 L771.5 538.5 L772.0 535.1 L772.5 531.8 L773.0 527.9 L773.5 524.5 L774.0 521.2 L774.5 517.9 L775.0 515.2 L775.5 513.3 L776.0 512.0 L776.5 511.1 L777.0 511.1 L777.5 511.7 L778.0 513.0 L778.5 514.8 L779.0 516.9 L779.5 519.5 L780.0 522.4 L780.5 525.8 L781.0 529.4 L781.5 532.8 L782.0 536.1 L782.5 539.4 L783.0 542.2 L783.5 545.3 L784.0 547.7 L784.5 550.1 L785.0 552.4 L785.5 554.4 L786.0 556.1 L786.5 557.5 L787.0 558.5 L787.5 559.4 L788.0 559.7 L788.5 560.0 L789.0 559.8 L789.5 560.0 L790.0 560.3 L790.5 560.2 L791.0 560.5 L791.5 560.5 L792.0 560.4 L792.5 560.7 L793.0 560.3 L793.5 560.4 L794.0 560.0 L794.5 560.0 L795.0 560.5 L795.5 560.3 L796.0 560.2 L796.5 560.4 L797.0 560.4 L797.5 560.5 L798.0 560.2 L798.5 560.3 L799.0 560.7 L799.5 560.7 L800.0 560.4 L800.5 560.4 L801.0 560.4 L801.5 560.5 L802.0 560.5 L802.5 560.6 L803.0 560.7 L803.5 560.6 L804.0 560.7 L804.5 560.7 L805.0 560.6 L805.5 560.3 L806.0 560.3 L806.5 560.1 L807.0 560.0 L807.5 559.4 L808.0 559.6 L808.5 559.0 L809.0 559.3 L809.5 559.1 L810.0 559.0 L810.5 559.1 L811.0 558.9 L811.5 558.6 L812.0 558.5 L812.5 558.4 L813.0 558.2 L813.5 558.2 L814.0 558.5 L814.5 558.9 L815.0 559.4 L815.5 559.6 L816.0 559.9 L816.5 560.1 L817.0 560.0 L817.5 559.9 L818.0 559.9 L818.5 559.7 L819.0 559.3 L819.5 559.1 L820.0 558.8 L820.5 558.8 L821.0 558.6 L821.5 558.8 L822.0 558.8 L822.5 558.6 L823.0 559.1 L823.5 559.0 L824.0 559.7 L824.5 560.2 L825.0 560.8 L825.5 560.9 L826.0 561.5 L826.5 562.0 L827.0 561.8 L827.5 561.9 L828.0 562.2 L828.5 562.1 L829.0 562.2 L829.5 561.8 L830.0 561.4 L830.5 561.0 L831.0 560.1 L831.5 559.1 L832.0 557.8 L832.5 556.1 L833.0 554.1 L833.5 552.0 L834.0 549.2 L834.5 546.4 L835.0 542.8 L835.5 539.0 L836.0 534.9 L836.5 531.1 L837.0 527.3 L837.5 523.8 L838.0 520.5 L838.5 517.9 L839.0 515.7 L839.5 514.0 L840.0 513.4 L840.5 513.8 L841.0 515.2 L841.5 517.0 L842.0 519.9 L842.5 523.4 L843.0 526.8 L843.5 530.9 L844.0 535.2 L844.5 539.1 L845.0 542.7 L845.5 546.0 L846.0 549.5 L846.5 552.2 L847.0 554.7 L847.5 556.8 L848.0 558.4 L848.5 559.6 L849.0 560.5 L849.5 561.4 L850.0 562.1 L850.5 562.6 L851.0 562.8 L851.5 563.1 L852.0 563.5 L852.5 563.6 L853.0 563.5 L853.5 563.8 L854.0 563.5 L854.5 563.0 L855.0 563.1 L855.5 563.1 L856.0 562.7 L856.5 562.8 L857.0 562.4 L857.5 562.5 L858.0 562.7 L858.5 562.5 L859.0 562.5 L859.5 562.2 L860.0 562.2 L860.5 562.2 L861.0 561.9 L861.5 562.0 L862.0 561.9 L862.5 562.1 L863.0 562.0 L863.5 562.1 L864.0 562.1 L864.5 562.2 L865.0 562.4 L865.5 562.0 L866.0 561.8 L866.5 561.7 L867.0 561.7 L867.5 561.6 L868.0 561.4 L868.5 561.3 L869.0 560.9 L869.5 560.7 L870.0 560.8 L870.5 560.3 L871.0 560.1 L871.5 559.6 L872.0 559.2 L872.5 559.1 L873.0 559.2 L873.5 560.1 L874.0 560.5 L874.5 560.6 L875.0 560.4 L875.5 559.8 L876.0 558.9 L876.5 558.6 L877.0 557.9 L877.5 557.6 L878.0 556.9 L878.5 556.7 L879.0 556.3 L879.5 556.1 L880.0 556.4 L880.5 556.3 L881.0 556.1 L881.5 556.5 L882.0 556.6 L882.5 556.5 L883.0 556.7 L883.5 556.9 L884.0 556.6 L884.5 556.8 L885.0 556.4 L885.5 556.4 L886.0 556.6 L886.5 556.2 L887.0 556.0 L887.5 556.0 L888.0 555.4 L888.5 555.3 L889.0 554.8 L889.5 554.7 L890.0 554.6 L890.5 554.2 L891.0 554.2 L891.5 553.3 L892.0 552.7 L892.5 551.5 L893.0 550.6 L893.5 549.2 L894.0 547.5 L894.5 545.2 L895.0 542.8 L895.5 540.3 L896.0 536.9 L896.5 533.4 L897.0 529.9 L897.5 526.5 L898.0 523.3 L898.5 520.4 L899.0 518.3 L899.5 516.4 L900.0 515.1 L900.5 514.9 L901.0 514.9 L901.5 515.9 L902.0 517.8 L902.5 519.7 L903.0 522.6 L903.5 526.0 L904.0 529.4 L904.5 532.8 L905.0 536.7 L905.5 540.6 L906.0 544.0 L906.5 547.5 L907.0 549.9 L907.5 552.6 L908.0 554.5 L908.5 556.1 L909.0 557.6 L909.5 558.7 L910.0 559.9 L910.5 560.4 L911.0 561.2 L911.5 561.3 L912.0 561.3 L912.5 561.3 L913.0 561.4 L913.5 561.0 L914.0 560.9 L914.5 560.2 L915.0 560.1 L915.5 560.0 L916.0 559.8 L916.5 560.3 L917.0 560.4 L917.5 560.9 L918.0 561.3 L918.5 561.5 L919.0 561.8 L919.5 561.8 L920.0 562.0 L920.5 562.4 L921.0 562.2 L921.5 562.5 L922.0 562.3 L922.5 562.5 L923.0 562.2 L923.5 562.0 L924.0 561.6 L924.5 561.2 L925.0 561.1 L925.5 561.1 L926.0 561.2 L926.5 561.7 L927.0 561.7 L927.5 562.0 L928.0 562.4 L928.5 562.5 L929.0 562.7 L929.5 563.0 L930.0 563.0 L930.5 563.4 L931.0 563.6 L931.5 564.0 L932.0 563.9 L932.5 563.4 L933.0 562.9 L933.5 562.5 L934.0 561.9 L934.5 561.2 L935.0 561.1 L935.5 560.6 L936.0 560.5 L936.5 560.1 L937.0 559.9 L937.5 560.1 L938.0 559.8 L938.5 559.6 L939.0 559.1 L939.5 559.0 L940.0 559.1 L940.5 559.3 L941.0 559.5 L941.5 559.6 L942.0 559.5 L942.5 559.7 L943.0 559.7 L943.5 559.2 L944.0 559.3 L944.5 559.0 L945.0 558.9 L945.5 558.6 L946.0 558.7 L946.5 558.8 L947.0 558.6 L947.5 558.4 L948.0 558.8 L948.5 558.8 L949.0 558.6 L949.5 558.4 L950.0 558.6 L950.5 558.1 L951.0 557.3 L951.5 556.9 L952.0 556.3 L952.5 556.1 L953.0 555.3 L953.5 554.9 L954.0 553.9 L954.5 552.5 L955.0 551.5 L955.5 549.9 L956.0 548.5 L956.5 546.9 L957.0 545.0 L957.5 543.3 L958.0 542.2 L958.5 540.6 L959.0 539.7 L959.5 538.8 L960.0 538.4 L960.5 538.3 L961.0 538.6 L961.5 539.2 L962.0 540.0 L962.5 541.5 L963.0 542.8 L963.5 544.3 L964.0 546.1 L964.5 547.3 L965.0 549.2 L965.5 550.3 L966.0 551.9 L966.5 553.1 L967.0 553.8 L967.5 554.7 L968.0 555.7 L968.5 556.1 L969.0 556.6 L969.5 556.9 L970.0 557.1 L970.5 557.2 L971.0 557.1 L971.5 556.8 L972.0 556.6 L972.5 556.3 L973.0 556.5 L973.5 556.6 L974.0 556.7 L974.5 557.1 L975.0 557.7 L975.5 558.0 L976.0 558.5 L976.5 558.4 L977.0 558.4 L977.5 558.8 L978.0 558.4 L978.5 558.4 L979.0 558.1 L979.5 558.1 L980.0 557.5 L980.5 557.2 L981.0 556.6 L981.5 556.6 L982.0 556.5 L982.5 556.6 L983.0 557.1 L983.5 557.5 L984.0 557.5 L984.5 557.9 L985.0 558.1 L985.5 558.2 L986.0 558.3 L986.5 558.5 L987.0 558.5 L987.5 558.8 L988.0 558.7 L988.5 558.4 L989.0 558.5 L989.5 558.5 L990.0 558.5 L990.5 558.5 L991.0 558.6 L991.5 558.8 L992.0 559.5 L992.5 559.5 L993.0 559.4 L993.5 560.0 L994.0 560.5 L994.5 560.8 L995.0 561.2 L995.5 562.0 L996.0 562.6 L996.5 562.9 L997.0 563.2 L997.5 562.7 L998.0 562.9 L998.5 562.3 L999.0 561.8 L999.5 561.4 L1000.0 560.8 L1000.5 560.1 L1001.0 559.8 L1001.5 559.4 L1002.0 559.1 L1002.5 559.3 L1003.0 559.2 L1003.5 558.8 L1004.0 558.6 L1004.5 558.6 L1005.0 558.6 L1005.5 558.7 L1006.0 558.5 L1006.5 559.2 L1007.0 559.6 L1007.5 559.9 L1008.0 560.1 L1008.5 560.3 L1009.0 560.8 L1009.5 560.6 L1010.0 560.6 L1010.5 560.4 L1011.0 560.0 L1011.5 559.6 L1012.0 558.5 L1012.5 557.6 L1013.0 557.2 L1013.5 556.5 L1014.0 555.9 L1014.5 555.1 L1015.0 554.4 L1015.5 553.7 L1016.0 552.7 L1016.5 552.0 L1017.0 551.2 L1017.5 550.8 L1018.0 550.7 L1018.5 550.3 L1019.0 550.5 L1019.5 550.3 L1020.0 550.7 L1020.5 551.3 L1021.0 551.4 L1021.5 552.0 L1022.0 552.9 L1022.5 553.5 L1023.0 554.5 L1023.5 554.7 L1024.0 555.6 L1024.5 556.0 L1025.0 556.5 L1025.5 556.9 L1026.0 557.4 L1026.5 558.0 L1027.0 558.3 L1027.5 558.5 L1028.0 558.7 L1028.5 558.9 L1029.0 559.2 L1029.5 559.3 L1030.0 559.5 L1030.5 559.2 L1031.0 559.1 L1031.5 559.0 L1032.0 558.9 L1032.5 558.7 L1033.0 558.6 L1033.5 558.6 L1034.0 558.7 L1034.5 558.7 L1035.0 558.9 L1035.5 558.9 L1036.0 558.8 L1036.5 559.0 L1037.0 559.2 L1037.5 559.4 L1038.0 559.8 L1038.5 559.6 L1039.0 560.0 L1039.5 559.9 L1040.0 559.5 L1040.5 559.4 L1041.0 559.4 L1041.5 558.9 L1042.0 558.9 L1042.5 558.6 L1043.0 558.5 L1043.5 558.7 L1044.0 558.2 L1044.5 558.1 L1045.0 558.2 L1045.5 557.7 L1046.0 557.0 L1046.5 556.6 L1047.0 555.8 L1047.5 555.4 L1048.0 554.9 L1048.5 554.7 L1049.0 554.5 L1049.5 554.4 L1050.0 554.3 L1050.5 554.4 L1051.0 555.0 L1051.5 555.2 L1052.0 555.5 L1052.5 556.5 L1053.0 556.9 L1053.5 557.5 L1054.0 558.3 L1054.5 558.6 L1055.0 559.3 L1055.5 560.7 L1056.0 561.9 L1056.5 562.4 L1057.0 560.4 L1057.5 557.0 L1058.0 553.4 L1058.5 551.6 L1059.0 556.1 L1059.5 562.2 L1060.0 562.4 L1060.5 557.9 L1061.0 555.1 L1061.5 558.2 L1062.0 563.6 L1062.5 565.4" stroke="#ffffff" stroke-width="1" fill="none"/></svg></div><div style="left:16px;top:167px;width:1047px;height:22px;background:#f0f0f0;border-top:1px solid #fafafa;border-bottom:1px solid #f8f8f8"></div><div class="bm" style="left:18px;top:169px;width:17px;height:17.5px"><svg width="16" height="16" viewBox="0 0 16 16"><circle cx="8" cy="8" r="6.1" fill="#008000" stroke="#003a00" stroke-width="0.8"/><path d="M5.6 6.3 Q5.6 3.6 8 3.6 Q10.4 3.6 10.4 5.8 Q10.4 7.2 9 7.9 Q8 8.4 8 9.7" stroke="#fff" stroke-width="1.9" fill="none"/><rect x="6.9" y="10.7" width="2.2" height="2.1" fill="#fff"/></svg></div><div class="bm" style="left:36px;top:169px;width:17px;height:17.5px"><svg width="16" height="16" viewBox="0 0 16 16"><circle cx="8" cy="8" r="5.5" fill="#b0b0b0" stroke="#404040" stroke-width="1"/><path d="M5.5 5.5 L10.5 10.5 M10.5 5.5 L5.5 10.5" stroke="#e0e0e0" stroke-width="1.2"/></svg></div><div class="bm" style="left:54.3px;top:169px;width:17px;height:17.5px"><div style="left:2px;top:2px;width:12px;height:12px;background:#c4c4c4"></div><svg width="16" height="16" viewBox="0 0 16 16"><path d="M3 8 L13 8" stroke="#888" stroke-width="2.5"/></svg></div><div class="bm" style="left:72.3px;top:169px;width:17px;height:17.5px"><div style="left:2px;top:2px;width:12px;height:12px;background:#c4c4c4"></div><svg width="16" height="16" viewBox="0 0 16 16"><path d="M3 8 L13 8 M8 3 L8 13" stroke="#888" stroke-width="2.5"/></svg></div><div class="bm" style="left:90.5px;top:169px;width:17px;height:17.5px"><div style="left:2px;top:2px;width:12px;height:12px;background:#c4c4c4"></div><svg width="16" height="16" viewBox="0 0 16 16"><path d="M2 8 L6.5 4 L6.5 12 Z M14 8 L9.5 4 L9.5 12 Z" fill="#888"/></svg></div><div class="bm" style="left:108.7px;top:169px;width:17px;height:17.5px"><div style="left:2px;top:2px;width:12px;height:12px;background:#c4c4c4"></div><svg width="16" height="16" viewBox="0 0 16 16"><path d="M8 2.5 L12.5 6.5 L3.5 6.5 Z M8 13.5 L12.5 9.5 L3.5 9.5 Z" fill="#888"/></svg></div><div class="bm" style="left:127px;top:169px;width:17px;height:17.5px"><div style="left:2px;top:2px;width:12px;height:12px;background:#c4c4c4"></div><svg width="16" height="16" viewBox="0 0 16 16"><path d="M8 2 L12 6 L4 6 Z M8 14 L12 10 L4 10 Z" fill="#888"/><path d="M3 8 L13 8" stroke="#ddd" stroke-width="1"/><path d="M8 5 L8 11" stroke="#888" stroke-width="2"/></svg></div><div class="bm" style="left:145px;top:169px;width:17px;height:17.5px"><div style="left:2px;top:2px;width:12px;height:12px;background:#c4c4c4"></div><svg width="16" height="16" viewBox="0 0 16 16"><path d="M4 7 Q4 3 8 3 Q11 3 12 6 M12 9 Q12 13 8 13 Q5 13 4 10" stroke="#888" stroke-width="1.4" fill="none"/></svg></div><div class="bm" style="left:163.3px;top:169px;width:17px;height:17.5px"><div style="left:2px;top:2px;width:12px;height:12px;background:#c4c4c4"></div><svg width="16" height="16" viewBox="0 0 16 16"><path d="M8 2.5 L12.5 6.5 L3.5 6.5 Z M8 13.5 L12.5 9.5 L3.5 9.5 Z" fill="#888"/></svg></div><div class="b" style="left:181px;top:169px;width:23px;height:18px"><div class="t" style="left:8px;top:3px;color:#a8a8a8;font-size:10px;transform:scaleX(0.85)">0</div></div><div style="left:205.5px;top:168.5px;width:2px;height:18px;border-left:1px solid #a0a0a0;border-right:1px solid #fff"></div><div class="sunk" style="left:208px;top:169px;width:212px;height:17px;border-top:2px solid #808080;border-left:2px solid #808080"></div><div style="left:420.5px;top:169px;width:17.5px;height:18px;background:#f8f8f8;border-top:1px solid #808080;border-left:1px solid #808080;border-right:1px solid #fff;border-bottom:1px solid #fff"><svg width="16" height="16" viewBox="0 0 16 16"><path d="M3 2 L3 11 L5.5 9 L7 12 L8.5 11.5 L7 8.5 L10 8.5 Z" fill="#fff" stroke="#222" stroke-width="0.9"/><text x="12" y="14.5" font-family="Liberation Sans" font-size="6.5" fill="#222" text-anchor="middle">z</text></svg></div><div class="bm" style="left:439.4px;top:169px;width:17px;height:17.5px"><svg width="16" height="16" viewBox="0 0 16 16"><circle cx="7" cy="7" r="4.3" fill="none" stroke="#111" stroke-width="1.2"/><path d="M10 10 L13.5 13.5" stroke="#111" stroke-width="1.8"/></svg></div><div class="bm" style="left:457.2px;top:169px;width:17px;height:17.5px"><svg width="16" height="16" viewBox="0 0 16 16"><path d="M2 14 L4 12 L6 5 L8 11 L10 5 L12 12 L14 14" stroke="#222" stroke-width="1" fill="none"/><path d="M1 3 L15 3 M7 1 L7 15" stroke="#0000e0" stroke-width="1.2"/></svg></div><div class="bm" style="left:475.5px;top:169px;width:17px;height:17.5px"><svg width="16" height="16" viewBox="0 0 16 16"><path d="M1 14 L3 12 L5 4 L7 10 L9 9 L11 5 L13 12 L15 14 Z" fill="#0000d0" stroke="#000040" stroke-width="0.6"/></svg></div><div class="bm" style="left:493.3px;top:169px;width:17px;height:17.5px"><svg width="16" height="16" viewBox="0 0 16 16"><text x="8" y="9" font-family="Liberation Sans" font-size="7.5" fill="#222" text-anchor="middle">B.E</text><path d="M1 12 L15 12" stroke="#0000e0" stroke-width="1"/><circle cx="2" cy="12" r="1.1" fill="#0000e0"/><circle cx="8" cy="11.5" r="1.1" fill="#0000e0"/><circle cx="14" cy="12" r="1.1" fill="#0000e0"/></svg></div><div class="bm" style="left:512px;top:169px;width:17px;height:17.5px"><svg width="16" height="16" viewBox="0 0 16 16"><text x="8" y="9" font-family="Liberation Sans" font-size="7.5" fill="#222" text-anchor="middle">D.E</text><path d="M1 12 L15 12" stroke="#0000e0" stroke-width="1"/><circle cx="2" cy="12" r="1.1" fill="#0000e0"/><circle cx="8" cy="11.5" r="1.1" fill="#0000e0"/><circle cx="14" cy="12" r="1.1" fill="#0000e0"/></svg></div><div class="bm" style="left:530.5px;top:169px;width:17px;height:17.5px"><svg width="16" height="16" viewBox="0 0 16 16"><path d="M1 14 L3 12 L6 3 L8 11 L10 4 L13 12 L15 14 M5 14 L7 9 M9 9 L11 14" stroke="#111" stroke-width="0.9" fill="none"/></svg></div><div class="bm" style="left:548.5px;top:169px;width:17px;height:17.5px"><svg width="16" height="16" viewBox="0 0 16 16"><text x="0.5" y="11.5" font-family="Liberation Sans" font-size="9" fill="#111">K</text><text x="6" y="11.5" font-family="Liberation Sans" font-size="8" fill="#111">&#945;</text><text x="10.6" y="12" font-family="Liberation Sans" font-size="7" fill="#111">2</text></svg></div><div class="bm" style="left:566.5px;top:169px;width:17px;height:17.5px"><svg width="16" height="16" viewBox="0 0 16 16"><text x="7" y="10" font-family="Liberation Sans" font-size="10" font-weight="bold" fill="#000" text-anchor="middle">C</text><path d="M3 13 L5 13 M6.5 13 L8.5 13 M10 13 L13 13" stroke="#555" stroke-width="1.2"/><circle cx="12" cy="10" r="0.8" fill="#000"/></svg></div><div class="bm" style="left:585px;top:169px;width:17px;height:17.5px"><svg width="16" height="16" viewBox="0 0 16 16"><path d="M1 14 L4 4 L7 14 M3 10 L5 10" stroke="#b8b8b8" stroke-width="1" fill="none"/><path d="M11 2 L11 14 M9.5 4 L11 2 L12.5 4 M9.5 12 L11 14 L12.5 12" stroke="#b8b8b8" stroke-width="1" fill="none"/></svg></div><div class="bm" style="left:603px;top:169px;width:17px;height:17.5px"><svg width="16" height="16" viewBox="0 0 16 16"><path d="M1 14 L9 14 M3 13 L3 7 M5.5 13 L5.5 4 M8 13 L8 9" stroke="#b8b8b8" stroke-width="1.1" fill="none"/><path d="M12 2 L12 14 M10.5 4 L12 2 L13.5 4 M10.5 12 L12 14 L13.5 12" stroke="#b8b8b8" stroke-width="1" fill="none"/></svg></div><div class="bm" style="left:621.3px;top:169px;width:17px;height:17.5px"><svg width="16" height="16" viewBox="0 0 16 16"><rect x="2.5" y="2.5" width="11" height="11" fill="#000" stroke="#505050" stroke-width="1"/><path d="M8 3.5 L8 12.5 M3.5 8 L12.5 8" stroke="#00d8e8" stroke-width="1.2"/></svg></div><div class="bm" style="left:639px;top:169px;width:17px;height:17.5px"><svg width="16" height="16" viewBox="0 0 16 16"><circle cx="8" cy="8" r="6.1" fill="#008000" stroke="#003a00" stroke-width="0.8"/><path d="M5.6 6.3 Q5.6 3.6 8 3.6 Q10.4 3.6 10.4 5.8 Q10.4 7.2 9 7.9 Q8 8.4 8 9.7" stroke="#fff" stroke-width="1.9" fill="none"/><rect x="6.9" y="10.7" width="2.2" height="2.1" fill="#fff"/></svg></div><div style="left:658.5px;top:169.5px;width:213.5px;height:16px;background:#fff;border-top:1px solid #909090;border-left:1px solid #e0e0e0"></div><div class="b" style="left:858.5px;top:171px;width:13px;height:14px"><svg width="10" height="12" viewBox="0 0 10 12"><path d="M1.5 5 L8.5 5 L5 8.5 Z" fill="#a0a0a0"/></svg></div><div class="b" style="left:875.5px;top:169px;width:22.5px;height:18px"><div class="t" style="left:8px;top:3px;color:#a8a8a8;font-size:10px;transform:scaleX(0.85)">0</div></div><div class="bm" style="left:899.4px;top:169px;width:17px;height:17.5px"><div style="left:2px;top:2px;width:12px;height:12px;background:#c4c4c4"></div><svg width="16" height="16" viewBox="0 0 16 16"><path d="M8 2.5 L12.5 6.5 L3.5 6.5 Z M8 13.5 L12.5 9.5 L3.5 9.5 Z" fill="#888"/></svg></div><div class="bm" style="left:917.2px;top:169px;width:17px;height:17.5px"><div style="left:2px;top:2px;width:12px;height:12px;background:#c4c4c4"></div><svg width="16" height="16" viewBox="0 0 16 16"><path d="M8 2 L12 6 L4 6 Z M8 14 L12 10 L4 10 Z" fill="#888"/><path d="M3 8 L13 8" stroke="#ddd" stroke-width="1"/><path d="M8 5 L8 11" stroke="#888" stroke-width="2"/></svg></div><div class="bm" style="left:935.5px;top:169px;width:17px;height:17.5px"><div style="left:2px;top:2px;width:12px;height:12px;background:#c4c4c4"></div><svg width="16" height="16" viewBox="0 0 16 16"><path d="M2 8 L6.5 4 L6.5 12 Z M14 8 L9.5 4 L9.5 12 Z" fill="#888"/></svg></div><div class="bm" style="left:953.8px;top:169px;width:17px;height:17.5px"><div style="left:2px;top:2px;width:12px;height:12px;background:#c4c4c4"></div><svg width="16" height="16" viewBox="0 0 16 16"><path d="M1.5 8 L6 4 L6 12 Z M14.5 8 L10 4 L10 12 Z" fill="#888"/><path d="M5 8 L11 8" stroke="#888" stroke-width="2"/></svg></div><div class="bm" style="left:972px;top:169px;width:17px;height:17.5px"><div style="left:2px;top:2px;width:12px;height:12px;background:#c4c4c4"></div><svg width="16" height="16" viewBox="0 0 16 16"><path d="M2 9 L13 9 M6 5 L6 12 M12 4 L12 11" stroke="#888" stroke-width="1.5"/></svg></div><div class="bm" style="left:990px;top:169px;width:17px;height:17.5px"><div style="left:2px;top:2px;width:12px;height:12px;background:#c4c4c4"></div><svg width="16" height="16" viewBox="0 0 16 16"><path d="M3 13 L13 13 M5 12 L5 6 M8 12 L8 3 M11 12 L11 7" stroke="#888" stroke-width="1.6"/></svg></div><div class="bm" style="left:1008.2px;top:169px;width:17px;height:17.5px"><svg width="16" height="16" viewBox="0 0 16 16"><circle cx="8" cy="8" r="5.5" fill="#b8b8b8" stroke="#404040" stroke-width="1"/><circle cx="8" cy="8" r="2" fill="none" stroke="#555" stroke-width="0.8"/></svg></div><div class="bm" style="left:1026.5px;top:169px;width:17px;height:17.5px"><svg width="16" height="16" viewBox="0 0 16 16"><path d="M5.5 2.5 L10.5 2.5 L13.5 5.5 L13.5 10.5 L10.5 13.5 L5.5 13.5 L2.5 10.5 L2.5 5.5 Z" fill="#b0b0b0" stroke="#505050" stroke-width="1"/><path d="M5.5 5.5 L10.5 10.5 M10.5 5.5 L5.5 10.5" stroke="#e0e0e0" stroke-width="1.2"/></svg></div><div class="bm" style="left:1044.3px;top:169px;width:17px;height:17.5px"><svg width="16" height="16" viewBox="0 0 16 16"><circle cx="8" cy="8" r="6.1" fill="#008000" stroke="#003a00" stroke-width="0.8"/><path d="M5.6 6.3 Q5.6 3.6 8 3.6 Q10.4 3.6 10.4 5.8 Q10.4 7.2 9 7.9 Q8 8.4 8 9.7" stroke="#fff" stroke-width="1.9" fill="none"/><rect x="6.9" y="10.7" width="2.2" height="2.1" fill="#fff"/></svg></div><div style="left:0;top:566px;width:1080px;height:15px;background:#008080"></div><svg width="1080" height="595" style="left:0;top:0"><path d="M16.5 566 L16.5 570" stroke="#c8e8e8" stroke-width="1"/><path d="M42.7 566 L42.7 570" stroke="#c8e8e8" stroke-width="1"/><path d="M68.8 566 L68.8 570" stroke="#c8e8e8" stroke-width="1"/><path d="M95.0 566 L95.0 570" stroke="#c8e8e8" stroke-width="1"/><path d="M121.2 566 L121.2 570" stroke="#c8e8e8" stroke-width="1"/><path d="M147.4 566 L147.4 570" stroke="#c8e8e8" stroke-width="1"/><path d="M173.6 566 L173.6 570" stroke="#c8e8e8" stroke-width="1"/><path d="M199.7 566 L199.7 570" stroke="#c8e8e8" stroke-width="1"/><path d="M225.9 566 L225.9 570" stroke="#c8e8e8" stroke-width="1"/><path d="M252.1 566 L252.1 570" stroke="#c8e8e8" stroke-width="1"/><path d="M278.2 566 L278.2 570" stroke="#c8e8e8" stroke-width="1"/><path d="M304.4 566 L304.4 570" stroke="#c8e8e8" stroke-width="1"/><path d="M330.6 566 L330.6 570" stroke="#c8e8e8" stroke-width="1"/><path d="M356.8 566 L356.8 570" stroke="#c8e8e8" stroke-width="1"/><path d="M382.9 566 L382.9 570" stroke="#c8e8e8" stroke-width="1"/><path d="M409.1 566 L409.1 570" stroke="#c8e8e8" stroke-width="1"/><path d="M435.3 566 L435.3 570" stroke="#c8e8e8" stroke-width="1"/><path d="M461.5 566 L461.5 570" stroke="#c8e8e8" stroke-width="1"/><path d="M487.7 566 L487.7 570" stroke="#c8e8e8" stroke-width="1"/><path d="M513.8 566 L513.8 570" stroke="#c8e8e8" stroke-width="1"/><path d="M540.0 566 L540.0 570" stroke="#c8e8e8" stroke-width="1"/><path d="M566.2 566 L566.2 570" stroke="#c8e8e8" stroke-width="1"/><path d="M592.4 566 L592.4 570" stroke="#c8e8e8" stroke-width="1"/><path d="M618.5 566 L618.5 570" stroke="#c8e8e8" stroke-width="1"/><path d="M644.7 566 L644.7 570" stroke="#c8e8e8" stroke-width="1"/><path d="M670.9 566 L670.9 570" stroke="#c8e8e8" stroke-width="1"/><path d="M697.1 566 L697.1 570" stroke="#c8e8e8" stroke-width="1"/><path d="M723.2 566 L723.2 570" stroke="#c8e8e8" stroke-width="1"/><path d="M749.4 566 L749.4 570" stroke="#c8e8e8" stroke-width="1"/><path d="M775.6 566 L775.6 570" stroke="#c8e8e8" stroke-width="1"/><path d="M801.8 566 L801.8 570" stroke="#c8e8e8" stroke-width="1"/><path d="M827.9 566 L827.9 570" stroke="#c8e8e8" stroke-width="1"/><path d="M854.1 566 L854.1 570" stroke="#c8e8e8" stroke-width="1"/><path d="M880.3 566 L880.3 570" stroke="#c8e8e8" stroke-width="1"/><path d="M906.5 566 L906.5 570" stroke="#c8e8e8" stroke-width="1"/><path d="M932.6 566 L932.6 570" stroke="#c8e8e8" stroke-width="1"/><path d="M958.8 566 L958.8 570" stroke="#c8e8e8" stroke-width="1"/><path d="M985.0 566 L985.0 570" stroke="#c8e8e8" stroke-width="1"/><path d="M1011.1 566 L1011.1 570" stroke="#c8e8e8" stroke-width="1"/><path d="M1037.3 566 L1037.3 570" stroke="#c8e8e8" stroke-width="1"/><path d="M1063.5 566 L1063.5 570" stroke="#c8e8e8" stroke-width="1"/></svg><div class="t" style="left:1.5px;top:569.5px;width:30px;text-align:center;color:#c8f0f0;font-size:10px">10</div><div class="t" style="left:132.4px;top:569.5px;width:30px;text-align:center;color:#c8f0f0;font-size:10px">20</div><div class="t" style="left:263.2px;top:569.5px;width:30px;text-align:center;color:#c8f0f0;font-size:10px">30</div><div class="t" style="left:394.1px;top:569.5px;width:30px;text-align:center;color:#c8f0f0;font-size:10px">40</div><div class="t" style="left:525.0px;top:569.5px;width:30px;text-align:center;color:#c8f0f0;font-size:10px">50</div><div class="t" style="left:655.9px;top:569.5px;width:30px;text-align:center;color:#c8f0f0;font-size:10px">60</div><div class="t" style="left:786.8px;top:569.5px;width:30px;text-align:center;color:#c8f0f0;font-size:10px">70</div><div class="t" style="left:917.6px;top:569.5px;width:30px;text-align:center;color:#c8f0f0;font-size:10px">80</div><div class="t" style="left:1048.5px;top:569.5px;width:30px;text-align:center;color:#c8f0f0;font-size:10px">90</div><div style="left:0;top:581px;width:1080px;height:14px;background:#f0f0f0"></div><div class="sb" style="left:0.5px;top:582px;width:73px;height:13px;"></div><div class="t" style="left:8px;top:583px;color:#111;font-size:10.5px"><span style="display:inline-block;transform:scaleX(0.8);transform-origin:0 0">Derived Pattern</span></div><div class="sb" style="left:76px;top:582px;width:70px;height:13px;"></div><div class="t" style="left:97px;top:583px;color:#111;font-size:10.5px"><span style="display:inline-block;transform:scaleX(0.8);transform-origin:0 0">0 Peaks</span></div><div class="sb" style="left:150px;top:582px;width:61px;height:13px;"></div><div class="t" style="left:161px;top:583px;color:#111;font-size:10.5px"><span style="display:inline-block;transform:scaleX(0.8);transform-origin:0 0">2T=10.060</span></div><div class="sb" style="left:212.5px;top:582px;width:62px;height:13px;"></div><div class="t" style="left:226px;top:583px;color:#111;font-size:10.5px"><span style="display:inline-block;transform:scaleX(0.8);transform-origin:0 0">d=8.7850</span></div><div class="sb" style="left:277px;top:582px;width:60.5px;height:13px;"></div><div class="t" style="left:296px;top:583px;color:#111;font-size:10.5px"><span style="display:inline-block;transform:scaleX(0.8);transform-origin:0 0">I=737</span></div><div class="sb" style="left:339.5px;top:582px;width:64.5px;height:13px;"></div><div class="t" style="left:351px;top:583px;color:#111;font-size:10.5px"><span style="display:inline-block;transform:scaleX(0.8);transform-origin:0 0">Two-Theta</span></div><div class="sb" style="left:405px;top:582px;width:23.5px;height:13px;"></div><div class="t" style="left:408.5px;top:583px;color:#a0a0a0;font-size:10.5px"><span style="display:inline-block;transform:scaleX(0.84);transform-origin:0 0">SAV</span></div><div class="sb" style="left:429.56px;top:582px;width:23.5px;height:13px;"></div><div class="t" style="left:433.06px;top:583px;color:#a0a0a0;font-size:10.5px"><span style="display:inline-block;transform:scaleX(0.84);transform-origin:0 0">PKS</span></div><div class="sb" style="left:454.12px;top:582px;width:23.5px;height:13px;"></div><div class="t" style="left:457.62px;top:583px;color:#a0a0a0;font-size:10.5px"><span style="display:inline-block;transform:scaleX(0.84);transform-origin:0 0">DSP</span></div><div class="sb" style="left:478.68px;top:582px;width:23.5px;height:13px;"></div><div class="t" style="left:482.18px;top:583px;color:#a0a0a0;font-size:10.5px"><span style="display:inline-block;transform:scaleX(0.84);transform-origin:0 0">PDF</span></div><div class="sb" style="left:503.24px;top:582px;width:23.5px;height:13px;"></div><div class="t" style="left:506.74px;top:583px;color:#a0a0a0;font-size:10.5px"><span style="display:inline-block;transform:scaleX(0.84);transform-origin:0 0">PFT</span></div><div class="sb" style="left:527.8px;top:582px;width:23.5px;height:13px;"></div><div class="t" style="left:531.3px;top:583px;color:#a0a0a0;font-size:10.5px"><span style="display:inline-block;transform:scaleX(0.84);transform-origin:0 0">RPT</span></div><div class="sb" style="left:552.36px;top:582px;width:23.5px;height:13px;"></div><div class="t" style="left:555.86px;top:583px;color:#a0a0a0;font-size:10.5px"><span style="display:inline-block;transform:scaleX(0.84);transform-origin:0 0">PID</span></div><div class="sb" style="left:576.92px;top:582px;width:23.5px;height:13px;"></div><div class="t" style="left:580.42px;top:583px;color:#a0a0a0;font-size:10.5px"><span style="display:inline-block;transform:scaleX(0.84);transform-origin:0 0">SZS</span></div><div class="sb" style="left:601.48px;top:582px;width:23.5px;height:13px;"></div><div class="t" style="left:604.98px;top:583px;color:#a0a0a0;font-size:10.5px"><span style="display:inline-block;transform:scaleX(0.84);transform-origin:0 0">KSI</span></div><div class="sb" style="left:626.04px;top:582px;width:23.5px;height:13px;"></div><div class="t" style="left:629.54px;top:583px;color:#a0a0a0;font-size:10.5px"><span style="display:inline-block;transform:scaleX(0.84);transform-origin:0 0">FIT</span></div><div class="sb" style="left:650.6px;top:582px;width:23.5px;height:13px;"></div><div class="t" style="left:654.1px;top:583px;color:#a0a0a0;font-size:10.5px"><span style="display:inline-block;transform:scaleX(0.84);transform-origin:0 0">2TH</span></div><div class="sb" style="left:675.16px;top:582px;width:23.5px;height:13px;"></div><div class="t" style="left:678.66px;top:583px;color:#a0a0a0;font-size:10.5px"><span style="display:inline-block;transform:scaleX(0.84);transform-origin:0 0">ABC</span></div><div class="sb" style="left:699.72px;top:582px;width:23.5px;height:13px;"></div><div class="t" style="left:703.22px;top:583px;color:#a0a0a0;font-size:10.5px"><span style="display:inline-block;transform:scaleX(0.84);transform-origin:0 0">RRP</span></div><div class="sb" style="left:726.5px;top:582px;width:48.5px;height:13px;"></div><div class="t" style="left:733px;top:583px;color:#111;font-size:10.5px"><span style="display:inline-block;transform:scaleX(0.84);transform-origin:0 0">LOG=OFF</span></div><div style="left:1078px;top:0;width:2px;height:595px;background:rgba(100,150,200,0.6)"></div></body></html>
